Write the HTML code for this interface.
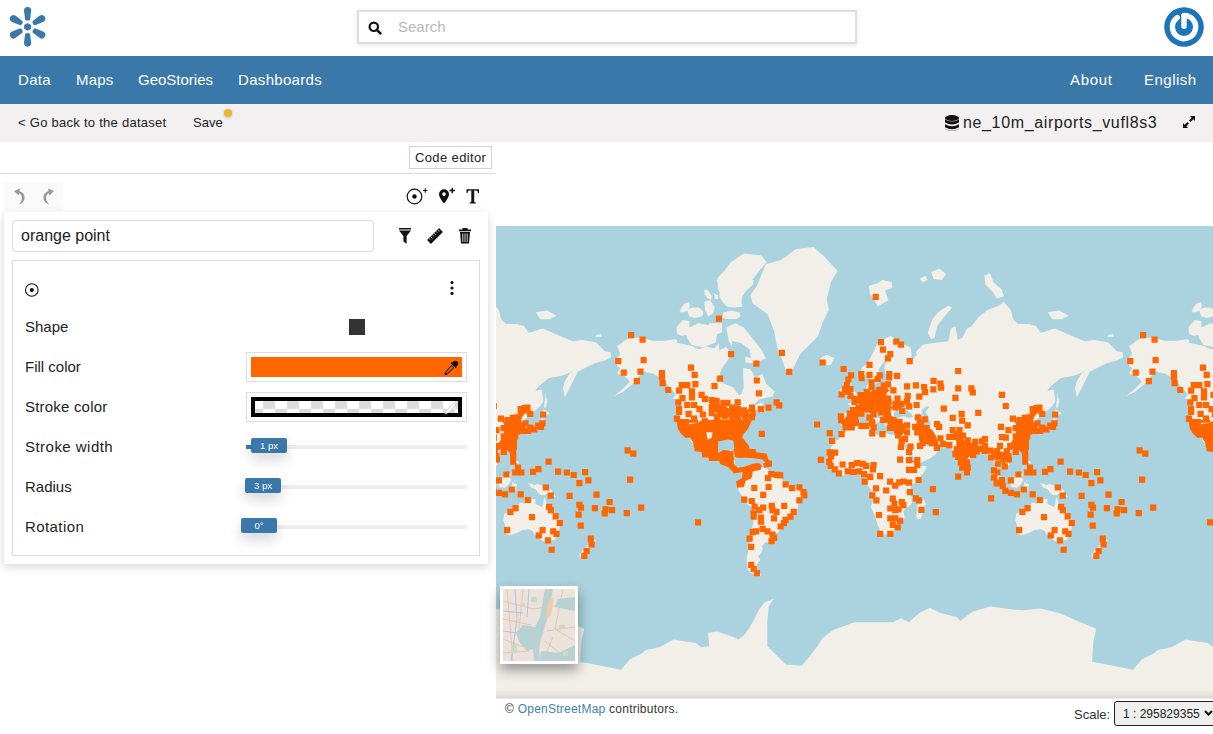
<!DOCTYPE html>
<html><head><meta charset="utf-8">
<style>
*{box-sizing:border-box;margin:0;padding:0}
html,body{width:1213px;height:734px;overflow:hidden;background:#fff;font-family:"Liberation Sans",sans-serif;color:#222}
.abs{position:absolute;display:block}
#search{position:absolute;left:357px;top:10px;width:500px;height:34px;border:2px solid #dedede;background:#fff;box-shadow:0 1px 4px rgba(0,0,0,.10)}
#search .ph{position:absolute;left:39px;top:6px;font-size:15px;color:#b8b8b8;line-height:17px}
#nav{position:absolute;left:0;top:56px;width:1213px;height:48px;background:#3a78a9}
#nav span{position:absolute;top:15px;font-size:15px;color:#fff;line-height:18px}
#sub{position:absolute;left:0;top:104px;width:1213px;height:38px;background:#f2f0f0}
.t13{position:absolute;font-size:13px;color:#222;line-height:16px;white-space:nowrap}
.lbl{position:absolute;left:25px;font-size:15px;color:#222;line-height:18px;white-space:nowrap}
.handle{position:absolute;height:15px;background:#3a78a9;border-radius:2px;color:#fff;font-size:9.6px;line-height:16px;text-align:center;box-shadow:0 6px 14px rgba(0,0,0,.17)}
.track{position:absolute;left:246px;width:221px;height:4px;background:#efeded}
</style></head><body>
<!-- header -->
<svg class="abs" style="left:0;top:0" width="56" height="56" viewBox="0 0 56 56">
  <g fill="#3b77a8">
    <g id="pt"><path d="M25.2 19.7 L24.0 11.0 Q23.8 6.9 27.6 6.9 Q31.4 6.9 31.2 11.0 L30.0 19.7 Q27.6 21.5 25.2 19.7 Z"/></g>
    <use href="#pt" transform="rotate(60 27.6 26.8)"/>
    <use href="#pt" transform="rotate(120 27.6 26.8)"/>
    <use href="#pt" transform="rotate(180 27.6 26.8)"/>
    <use href="#pt" transform="rotate(240 27.6 26.8)"/>
    <use href="#pt" transform="rotate(300 27.6 26.8)"/>
    <path d="M27.6 23.1 L31.1 25.0 L31.1 28.8 L27.6 30.7 L24.1 28.8 L24.1 25.0 Z"/>
  </g>
</svg>
<div id="search"><svg class="abs" style="left:8.5px;top:8.5px" width="14" height="14" viewBox="0 0 14 14"><circle cx="5.8" cy="5.8" r="4.2" fill="none" stroke="#111" stroke-width="2.2"/><path d="M8.8 8.8 L12.4 12.4" stroke="#111" stroke-width="2.6" stroke-linecap="round"/></svg><div class="ph">Search</div></div>
<svg class="abs" style="left:1163px;top:6px" width="42" height="42" viewBox="0 0 42 42">
  <circle cx="21" cy="21" r="19.8" fill="#1b75bb"/>
  <path d="M21 9.4 A11.6 11.6 0 1 1 14.18 11.62" fill="none" stroke="#fff" stroke-width="5.4" stroke-linecap="round"/>
  <path d="M21 10 V20.3" stroke="#fff" stroke-width="5.4" stroke-linecap="round"/>
</svg>
<!-- nav -->
<div id="nav">
  <span style="left:18px;letter-spacing:.33px">Data</span>
  <span style="left:76px;letter-spacing:.15px">Maps</span>
  <span style="left:138px">GeoStories</span>
  <span style="left:238px;letter-spacing:.32px">Dashboards</span>
  <span style="left:1070px;letter-spacing:.65px">About</span>
  <span style="left:1144px;letter-spacing:.48px">English</span>
</div>
<div id="sub">
  <span class="t13" style="left:18px;top:11px;letter-spacing:.27px">&lt; Go back to the dataset</span>
  <span class="t13" style="left:193px;top:11px">Save</span>
  <div class="abs" style="left:224px;top:5px;width:8px;height:8px;border-radius:50%;background:#f0b62b;box-shadow:0 1px 3px rgba(0,0,0,.2)"></div>
  <svg class="abs" style="left:945px;top:11px" width="14" height="17" viewBox="0 0 14 17"><g fill="#111"><ellipse cx="7" cy="3" rx="7" ry="3"/><path d="M0 4.6 Q7 8.6 14 4.6 V7.6 Q7 11.6 0 7.6Z"/><path d="M0 9.2 Q7 13.2 14 9.2 V12.2 Q7 16.2 0 12.2Z"/><path d="M0 13.8 Q7 17.8 14 13.8 V14 Q7 18 0 14Z"/></g></svg>
  <span class="abs" style="left:963px;top:10px;font-size:16px;letter-spacing:.64px;line-height:18px;color:#222;white-space:nowrap">ne_10m_airports_vufl8s3</span>
  <svg class="abs" style="left:1183px;top:12px" width="12" height="12" viewBox="0 0 12 12"><g fill="#111"><path d="M7 0 H12 V5 L10.3 3.3 L7.6 6 L6 4.4 L8.7 1.7Z"/><path d="M5 12 H0 V7 L1.7 8.7 L4.4 6 L6 7.6 L3.3 10.3Z"/></g></svg>
</div>
<!-- left panel -->
<div class="abs" style="left:409px;top:146px;width:83px;height:23px;border:1px solid #d4d4d4;background:#fff"></div>
<span class="t13" style="left:415px;top:150px;letter-spacing:.37px">Code editor</span>
<div class="abs" style="left:0;top:173px;width:496px;height:1px;background:#ddd"></div>
<div class="abs" style="left:4px;top:182px;width:59px;height:29px;background:#fafafa"></div>
<svg class="abs" style="left:12px;top:187px" width="46" height="20" viewBox="0 0 46 20">
  <g fill="#999">
    <path d="M2 4 L8 1.5 L7.5 4.2 Q13.5 6 12.5 12 Q11.5 16 7 17.5 Q10 14.5 10 11 Q9.8 7.5 7 6.3 L6.6 8.5Z"/>
    <path d="M42 4 L36 1.5 L36.5 4.2 Q30.5 6 31.5 12 Q32.5 16 37 17.5 Q34 14.5 34 11 Q34.2 7.5 37 6.3 L37.4 8.5Z"/>
  </g>
</svg>
<svg class="abs" style="left:404px;top:186px" width="80" height="20" viewBox="0 0 80 20">
  <circle cx="10.5" cy="10.5" r="7.3" fill="none" stroke="#111" stroke-width="1.2"/>
  <circle cx="10.5" cy="10.5" r="2.2" fill="#111"/>
  <path d="M19 4.5 H23.5 M21.25 2.3 V6.7" stroke="#111" stroke-width="1.1"/>
  <path d="M40 17.5 Q35 11.5 35 8.2 A5 5 0 0 1 45 8.2 Q45 11.5 40 17.5Z M40 6.3 A1.8 1.8 0 1 0 40.01 6.3Z" fill="#111" fill-rule="evenodd"/>
  <path d="M45.5 4.5 H51 M48.25 1.8 V7.2" stroke="#111" stroke-width="1.5"/>
  <path d="M62.5 3.2 H75 V7 H74 Q73.8 4.6 72 4.6 H70.2 V15.6 Q70.2 16.6 71.8 16.6 V17.5 H65.7 V16.6 Q67.3 16.6 67.3 15.6 V4.6 H65.5 Q63.7 4.6 63.5 7 H62.5Z" fill="#111"/>
</svg>
<div class="abs" style="left:4px;top:212px;width:484px;height:352px;background:#fff;box-shadow:0 3px 9px rgba(0,0,0,.16)"></div>
<div class="abs" style="left:12px;top:220px;width:362px;height:32px;border:1px solid #d8d8d8;border-radius:4px;background:#fff"></div>
<span class="abs" style="left:21px;top:227px;font-size:16px;line-height:18px;color:#222;white-space:nowrap">orange point</span>
<svg class="abs" style="left:396px;top:226px" width="80" height="20" viewBox="0 0 80 20">
  <path d="M3 2 H15 V3.6 H3Z M3 4.6 H15 L10.6 10 V17.8 L7.4 15.4 V10Z" fill="#111"/>
  <g transform="rotate(-45 39 10)"><rect x="30.5" y="7.3" width="17" height="5.4" fill="#111"/><path d="M33 7.3V9.3M35.5 7.3V10M38 7.3V9.3M40.5 7.3V10M43 7.3V9.3M45.5 7.3V10" stroke="#fff" stroke-width=".7"/></g>
  <path d="M63 3.4 H75 V5.2 H63Z M66.5 3.4 V2 H71.5 V3.4" fill="#111"/>
  <path d="M64 6 H74 L73 17.5 H65Z" fill="#111"/>
  <path d="M66.8 7.5 V16 M69 7.5 V16 M71.2 7.5 V16" stroke="#fff" stroke-width=".8"/>
</svg>
<div class="abs" style="left:12px;top:260px;width:468px;height:296px;border:1px solid #dcdcdc"></div>
<svg class="abs" style="left:23px;top:282px" width="18" height="18" viewBox="0 0 18 18"><circle cx="8.8" cy="8" r="6.3" fill="none" stroke="#111" stroke-width="1.1"/><circle cx="8.8" cy="8" r="2.1" fill="#111"/></svg>
<svg class="abs" style="left:448px;top:280px" width="8" height="17" viewBox="0 0 8 17"><circle cx="4" cy="2.6" r="1.6" fill="#111"/><circle cx="4" cy="8" r="1.6" fill="#111"/><circle cx="4" cy="13.4" r="1.6" fill="#111"/></svg>
<span class="lbl" style="top:318px">Shape</span>
<div class="abs" style="left:349px;top:319px;width:16px;height:16px;background:#333"></div>
<span class="lbl" style="top:358px">Fill color</span>
<div class="abs" style="left:246px;top:352px;width:221px;height:30px;border:1px solid #dcdcdc;background:#fff"></div>
<div class="abs" style="left:251px;top:357px;width:211px;height:20px;background:#ff6600"></div>
<svg class="abs" style="left:443px;top:360px" width="16" height="16" viewBox="0 0 16 16"><path d="M10.5 1.5 Q12.5 -0.2 14.3 1.6 Q16 3.4 14.4 5.4 L13.3 6.5 L13.8 7 L12.7 8.1 L7.8 3.2 L8.9 2.1 L9.4 2.6Z M8.3 4.9 L11.1 7.7 L4.6 14.2 L2.6 15.2 L1.4 14 L2.3 12 Z" fill="#111"/><path d="M8.6 6 L10 7.4 L4.3 13.1 L3 13.4 L3.2 12.2Z" fill="#ff6600"/></svg>
<span class="lbl" style="top:398px;letter-spacing:.2px">Stroke color</span>
<div class="abs" style="left:246px;top:392px;width:221px;height:30px;border:1px solid #dcdcdc;background:#fff"></div>
<svg class="abs" style="left:251px;top:397px" width="211" height="20" viewBox="0 0 211 20">
  <rect width="211" height="20" fill="#000"/>
  <svg x="4" y="4" width="203" height="12" viewBox="4 4 203 12"><rect x="4" y="4" width="203" height="12" fill="#fff"/><g fill="#dcdcdc"><rect x="0" y="12" width="12" height="12"/><rect x="12" y="0" width="12" height="12"/><rect x="24" y="12" width="12" height="12"/><rect x="36" y="0" width="12" height="12"/><rect x="48" y="12" width="12" height="12"/><rect x="60" y="0" width="12" height="12"/><rect x="72" y="12" width="12" height="12"/><rect x="84" y="0" width="12" height="12"/><rect x="96" y="12" width="12" height="12"/><rect x="108" y="0" width="12" height="12"/><rect x="120" y="12" width="12" height="12"/><rect x="132" y="0" width="12" height="12"/><rect x="144" y="12" width="12" height="12"/><rect x="156" y="0" width="12" height="12"/><rect x="168" y="12" width="12" height="12"/><rect x="180" y="0" width="12" height="12"/><rect x="192" y="12" width="12" height="12"/><rect x="204" y="0" width="12" height="12"/></g></svg>
  <path d="M194 17 L195.5 13.5 L203 6 L205 8 L197.5 15.5Z" fill="#fff" stroke="#c8c8c8" stroke-width=".8"/>
</svg>
<span class="lbl" style="top:438px;letter-spacing:.47px">Stroke width</span>
<div class="track" style="top:445px"></div>
<div class="abs" style="left:246px;top:445px;width:6px;height:4px;background:#3a78a9"></div>
<div class="handle" style="left:251px;top:438px;width:36px">1 px</div>
<span class="lbl" style="top:478px">Radius</span>
<div class="track" style="top:485px"></div>
<div class="handle" style="left:245px;top:478px;width:36px">3 px</div>
<span class="lbl" style="top:518px;letter-spacing:.42px">Rotation</span>
<div class="track" style="top:525px"></div>
<div class="handle" style="left:241px;top:518px;width:36px">0°</div>
<!-- map -->
<svg width="717" height="472" viewBox="0 0 717 472" style="position:absolute;left:496px;top:226px;display:block"><rect width="717" height="472" fill="#aad3df"/><path fill="#f2efe9" d="M39.8 86.3L51.3 84.5L60.5 89.8L53.6 93.3L44.4 93.3ZM99.8 108.9L105.5 108.0L105.5 110.8L99.8 111.3ZM-166.8 199.3L-167.5 196.2L-166.5 191.0L-167.2 188.1L-164.7 187.0L-158.3 187.4L-156.3 187.4L-155.7 183.2L-157.6 179.7L-160.7 178.0L-156.1 176.5L-156.7 174.3L-153.7 175.0L-151.9 173.4L-150.4 171.4L-148.9 170.5L-147.3 167.0L-144.8 165.8L-141.8 164.6L-142.1 162.2L-138.9 155.0L-139.1 159.4L-139.8 161.9L-138.4 163.4L-134.8 164.4L-130.5 163.2L-127.0 162.9L-124.0 160.2L-123.3 155.5L-118.9 150.4L-112.0 148.7L-115.6 147.3L-122.7 148.1L-123.7 141.3L-119.2 130.5L-125.1 137.2L-129.1 142.8L-129.1 147.3L-127.7 150.7L-130.2 155.5L-133.4 159.4L-135.5 160.9L-137.1 155.0L-138.4 151.5L-138.8 149.0L-144.0 154.2L-146.0 151.5L-147.0 145.8L-146.2 141.3L-141.2 138.2L-139.1 134.9L-134.8 126.2L-131.2 118.6L-122.7 112.5L-117.3 109.9L-108.5 115.4L-106.4 117.4L-97.4 121.4L-96.4 128.0L-96.4 134.9L-91.4 128.8L-91.8 125.6L-84.9 118.6L-68.7 116.3L-59.5 115.2L-57.2 102.5L-52.6 100.2L-50.3 114.0L-45.7 111.7L-41.0 102.5L-36.4 100.2L-29.5 90.9L-20.3 84.0L-8.7 79.4L-4.1 75.9L2.8 84.0L5.1 93.3L9.7 97.9L21.3 97.9L28.2 100.2L32.8 107.1L46.7 102.5L62.8 109.4L76.7 115.2L85.9 114.0L99.8 116.3L109.0 125.6L114.4 126.1L115.3 131.0L109.5 134.3L103.0 135.9L98.1 137.6L91.5 140.8L85.0 144.1L81.7 145.7L76.8 155.5L71.9 165.4L68.7 171.1L67.0 162.1L68.7 155.5L73.6 147.4L76.8 145.7L65.4 149.8L52.3 152.3L42.5 160.5L39.2 164.5L45.8 163.7L47.4 175.2L42.3 182.2L33.7 188.1L30.2 192.0L28.0 194.8L30.0 199.3L29.5 202.8L25.9 203.7L25.9 199.3L23.8 195.7L22.4 193.8L18.4 196.0L18.1 192.9L13.8 196.6L20.4 198.6L17.4 201.1L17.1 203.7L19.2 208.8L19.5 211.2L17.4 215.3L15.2 219.3L11.7 222.4L8.4 223.5L4.6 224.7L2.4 226.7L0.3 224.7L-2.5 227.0L-2.5 230.0L0.0 232.9L1.3 238.8L-1.8 241.0L-5.0 243.7L-5.7 241.1L-10.4 238.1L-11.1 236.6L-12.8 240.3L-11.2 244.6L-9.6 246.7L-6.9 251.7L-6.1 254.2L-9.6 252.4L-11.4 248.2L-14.2 243.9L-13.6 238.8L-15.2 232.2L-18.9 232.9L-19.9 229.2L-21.9 226.2L-26.0 223.9L-29.6 224.7L-33.1 227.7L-38.1 232.9L-39.8 237.4L-40.9 241.7L-43.8 244.4L-45.6 241.7L-47.8 237.4L-49.0 233.7L-50.5 228.5L-50.7 225.4L-55.9 223.5L-56.6 221.6L-58.7 219.6L-65.8 218.8L-72.2 218.5L-73.6 216.1L-79.3 215.8L-81.9 212.9L-85.0 211.2L-83.3 216.1L-82.2 218.5L-80.3 220.8L-76.5 220.5L-73.9 217.4L-70.5 221.6L-69.0 223.1L-71.9 227.7L-76.5 231.5L-82.2 234.4L-90.0 237.6L-92.1 237.9L-93.3 233.7L-98.2 224.7L-100.0 220.8L-104.2 214.5L-104.2 212.1L-105.4 215.0L-107.6 211.4L-105.1 208.8L-104.1 206.2L-103.1 203.7L-102.8 200.2L-104.6 199.8L-107.1 200.7L-110.3 199.5L-114.2 199.8L-116.3 196.6L-116.7 193.8L-112.8 192.0L-121.4 192.7L-121.3 194.8L-119.9 197.5L-122.0 200.4L-123.8 197.0L-125.6 193.8L-126.3 191.0L-127.7 189.1L-132.0 186.2L-134.4 183.6L-136.2 183.0L-136.2 186.2L-132.7 190.1L-131.2 191.0L-127.7 192.9L-129.5 195.7L-131.7 197.5L-133.8 192.3L-136.6 190.4L-139.4 187.2L-141.2 185.6L-144.8 187.4L-146.5 187.5L-149.0 187.2L-149.4 189.5L-150.9 191.2L-154.4 194.8L-153.7 196.2L-155.0 198.2L-157.1 199.8L-160.3 199.8L-162.0 201.1L-163.0 200.2L-164.5 198.9ZM32.3 204.5L35.2 201.9L39.4 201.6L40.6 199.3L41.3 198.4L43.7 197.7L45.1 193.8L45.8 191.4L47.2 191.4L48.0 194.8L46.5 199.3L46.4 201.6L45.0 203.0L42.6 203.5L39.1 205.4L38.0 204.0L35.2 204.5ZM32.2 204.7L31.6 209.6L33.0 208.8L33.3 205.4ZM34.4 205.7L37.3 204.0L37.7 205.4L35.2 206.6ZM45.1 191.0L45.5 187.7L47.8 183.2L52.2 186.2L53.4 187.5L49.8 190.1L46.5 189.5ZM48.0 182.2L48.2 178.0L49.4 171.4L48.8 163.7L49.7 169.1L51.2 175.8L50.1 181.1ZM18.8 218.8L17.8 223.9L16.8 222.4L17.7 220.0ZM3.2 227.0L1.7 229.7L0.6 229.2L1.4 227.3ZM17.7 229.2L19.8 229.2L19.5 232.9L22.4 235.9L22.4 238.1L18.8 236.2L17.4 235.2L17.1 232.2ZM24.5 242.1L26.1 246.0L24.2 248.0L19.5 246.0L21.6 243.9ZM24.5 238.8L23.8 241.7L20.9 242.9L19.5 241.0L19.5 239.1ZM16.0 239.5L16.5 240.0L13.3 243.9L12.7 244.2ZM12.1 246.0L15.2 248.2L13.8 250.3L15.2 254.6L11.7 259.6L8.8 261.7L3.9 261.0L2.7 260.3L2.4 257.4L1.0 253.9L3.9 253.2L6.7 251.7L8.1 249.6L10.0 248.2ZM-3.2 264.5L2.4 265.8L6.0 265.7L8.8 267.0L8.6 268.1L3.9 267.7L-0.4 267.0L-4.4 265.7ZM24.1 254.2L20.9 255.1L17.0 255.3L17.8 257.4L21.4 258.1L19.9 261.0L20.5 263.8L17.4 263.8L15.7 261.0L16.1 257.4L17.8 254.6L22.4 254.7ZM32.6 257.3L36.6 258.1L38.0 259.6L41.6 258.1L45.8 259.7L50.1 260.7L53.4 262.4L55.8 264.5L56.8 267.4L60.0 270.3L59.3 271.0L54.4 268.9L50.8 267.4L49.4 268.9L46.5 269.1L43.0 268.1L42.3 266.7L39.4 263.1L35.9 261.7L33.7 260.3L34.0 258.8L32.0 258.1ZM48.7 271.3L50.5 276.8L52.9 279.8L54.4 283.5L59.3 288.1L62.9 292.0L64.5 297.8L62.9 304.9L61.0 307.5L59.3 313.6L55.8 314.5L53.9 316.0L51.5 314.9L50.1 316.0L45.8 314.5L42.7 310.1L43.0 309.0L42.0 304.9L39.4 309.2L38.4 308.3L36.6 304.9L32.3 303.2L26.6 304.1L20.9 307.1L13.8 309.2L9.6 308.0L10.4 303.2L8.4 297.5L7.4 294.3L8.1 288.1L12.4 285.8L18.1 284.3L20.2 280.5L24.5 276.8L28.8 277.6L30.5 276.8L32.0 273.9L34.4 272.5L40.1 273.5L39.1 276.1L40.1 278.3L46.2 281.3L47.2 277.6L47.5 273.9ZM51.8 319.7L56.9 320.0L55.8 324.5L53.6 324.8L52.5 321.9ZM91.6 308.2L94.6 311.8L96.3 313.6L99.9 313.8L97.7 317.2L95.3 321.0L93.2 319.1L93.5 316.3L93.5 311.8ZM91.6 319.1L93.9 321.0L91.8 324.8L86.4 330.9L82.8 330.3L85.6 325.8L89.6 321.9ZM-428.0 435.8L-406.9 439.8L-387.1 443.7L-377.9 433.2L-367.3 427.9L-362.0 423.9L-348.8 421.3L-334.3 413.4L-311.9 417.3L-306.6 421.3L-298.7 420.0L-300.0 406.8L-290.8 405.5L-275.0 410.7L-269.7 413.4L-264.4 409.4L-259.1 402.8L-253.9 393.6L-248.6 383.0L-243.3 376.4L-234.1 372.5L-239.3 380.4L-240.7 396.2L-240.7 420.0L-232.7 427.9L-222.2 438.4L-206.4 439.8L-198.4 430.5L-190.5 420.0L-185.3 412.0L-174.7 404.1L-153.6 396.2L-129.8 396.2L-115.0 396.2L-107.1 392.3L-99.2 396.2L-88.6 387.0L-78.1 381.7L-67.5 387.0L-51.7 390.9L-47.7 394.9L-35.8 385.7L-17.4 380.4L1.1 383.0L14.3 384.3L32.8 382.5L51.2 387.0L69.7 394.9L88.2 402.8L85.5 414.7L84.0 435.8L84.0 511.2L-428.0 511.2ZM121.0 132.7L124.2 127.8L121.0 120.4L130.8 113.0L143.9 111.4L156.9 114.7L168.4 114.7L180.0 113.0L181.6 117.0L194.4 119.4L203.0 123.3L210.1 120.6L218.6 122.5L222.9 116.6L222.9 124.4L230.0 121.0L235.7 128.0L242.1 124.4L241.4 116.6L238.5 129.8L234.3 134.9L228.6 140.4L224.0 152.0L226.4 156.9L237.1 161.2L242.8 169.1L247.8 161.9L247.1 152.9L247.1 141.9L254.9 143.4L259.2 152.0L266.1 147.8L270.5 158.2L278.4 165.6L276.6 170.3L263.4 173.2L260.6 175.8L257.0 180.1L266.6 176.0L267.0 182.2L271.2 183.6L264.6 187.2L262.9 184.2L259.9 186.2L258.4 190.1L252.8 192.7L251.5 195.9L249.9 199.3L250.6 202.5L242.8 207.9L243.4 213.7L243.7 218.9L241.8 217.7L240.2 212.9L237.8 211.2L232.1 210.7L231.0 212.9L224.3 211.9L219.6 214.8L219.3 219.3L219.6 224.7L221.3 228.2L224.3 229.2L227.9 228.9L229.6 225.1L234.3 224.7L232.8 229.2L232.1 232.9L238.5 233.2L239.0 238.8L241.4 242.4L244.9 242.7L247.9 243.9L247.2 245.7L243.7 245.3L240.0 244.2L236.4 242.4L233.4 238.1L228.6 236.2L226.2 234.6L222.9 232.9L220.0 233.2L215.9 231.8L212.2 230.0L208.7 228.0L208.2 226.0L207.8 223.9L204.0 219.3L199.7 214.5L194.9 208.4L198.0 214.5L201.1 220.5L201.7 222.5L198.7 220.0L195.6 216.1L194.4 214.5L193.3 211.2L191.5 207.1L189.5 204.5L186.5 203.7L183.8 197.9L181.1 193.1L180.9 188.1L181.6 181.7L180.6 177.1L183.1 175.8L176.7 172.1L180.0 168.6L171.7 158.8L165.1 152.3L156.9 147.4L147.1 145.7L143.9 149.0L135.7 158.8L127.5 165.4L117.7 170.6L125.9 163.7L134.1 155.5L129.1 150.6L121.0 147.4L124.2 142.5L119.3 137.6ZM230.4 101.6L239.1 97.2L247.9 101.6L256.6 112.5L265.3 123.4L269.7 132.1L260.9 136.4L252.2 138.6L243.5 132.1L237.0 123.4L232.6 114.6ZM221.7 51.4L228.3 44.9L234.8 36.2L247.9 27.4L265.3 29.6L270.8 36.2L263.1 44.9L256.6 53.6L247.9 62.3L243.5 73.2L234.8 77.6L226.1 71.0L221.7 62.3ZM220.7 54.0L257.9 54.0L256.9 58.8L250.3 64.5L246.4 70.2L245.5 75.9L246.4 80.7L238.8 81.6L231.2 80.7L227.4 76.9L223.6 71.2L223.6 63.5ZM183.5 84.5L188.3 77.8L193.1 75.9L194.0 80.7L190.2 85.5L185.4 86.4ZM191.2 83.6L196.9 81.6L202.6 81.6L207.4 85.5L206.4 90.2L198.8 92.1L193.1 90.2ZM208.3 63.5L212.1 64.5L215.9 70.2L215.0 74.0L211.2 72.1L208.3 67.3ZM217.9 67.3L221.7 69.3L222.6 73.1L218.8 73.1ZM208.3 75.9L214.0 74.0L218.8 81.6L216.9 87.4L212.1 90.2L209.3 84.5ZM227.4 86.4L235.0 84.5L243.6 86.4L244.5 90.2L240.7 93.1L231.2 93.1L226.4 92.1ZM212.1 98.8L217.9 96.9L221.7 103.6L218.8 107.4L214.0 103.6ZM189.0 103.7L202.1 97.2L215.2 99.4L221.7 105.9L219.5 116.8L206.5 121.2L195.6 119.0L191.2 112.5ZM180.3 101.6L186.8 93.9L193.4 95.0L193.4 105.9L186.8 110.3L181.4 108.1ZM213.0 97.2L226.1 97.2L226.1 105.9L217.4 110.3L213.0 105.9ZM372.9 59.8L380.9 57.5L386.7 54.0L395.9 56.3L395.9 62.1L389.0 64.4L392.5 74.8L389.0 75.9L382.1 80.6L378.6 74.8L374.0 67.9ZM423.6 52.9L429.4 49.4L431.7 54.0L427.1 56.3ZM435.2 45.9L443.3 42.5L450.2 48.2L445.6 54.0L437.5 52.9ZM431.7 107.1L436.3 93.3L443.3 85.2L452.5 79.4L456.0 81.7L447.9 90.9L441.0 100.2L438.6 111.7L435.2 112.9ZM488.3 49.4L494.0 47.1L497.5 56.3L505.6 63.2L507.9 70.2L501.0 72.5L496.4 65.6L489.4 58.6ZM551.8 86.3L563.3 84.5L572.5 89.8L565.6 93.3L556.4 93.3ZM611.8 108.9L617.5 108.0L617.5 110.8L611.8 111.3ZM254.4 68.9L260.9 60.1L269.7 38.3L284.9 34.0L300.2 23.1L317.6 20.9L328.5 30.7L341.6 44.9L335.1 55.8L330.7 73.2L332.9 84.1L326.3 97.2L322.0 110.3L313.3 119.0L304.5 127.7L295.8 145.1L291.5 149.5L287.1 136.4L280.6 119.0L278.4 105.9L271.8 88.5L263.1 81.9L256.6 77.6ZM324.2 132.1L330.7 128.8L338.3 132.1L335.1 138.6L326.3 139.7ZM349.9 173.4L355.9 172.3L360.0 171.0L360.4 167.0L358.1 165.4L355.2 159.7L355.4 155.3L353.7 152.6L350.9 152.6L349.5 156.9L350.0 159.9L350.9 162.4L352.9 163.2L353.7 165.8L351.3 167.3L350.6 170.0L353.3 170.5L351.6 171.6ZM344.1 170.3L348.9 168.7L349.5 164.4L349.2 161.2L346.2 161.4L343.8 163.9L344.1 166.8L343.2 169.1ZM345.2 199.3L344.5 196.2L345.5 191.0L344.8 188.1L347.3 187.0L353.7 187.4L355.7 187.4L356.3 183.2L354.4 179.7L351.3 178.0L355.9 176.5L355.3 174.3L358.3 175.0L360.1 173.4L361.6 171.4L363.1 170.5L364.7 167.0L367.2 165.8L370.2 164.6L369.9 162.2L373.1 155.0L372.9 159.4L372.2 161.9L373.6 163.4L377.2 164.4L381.5 163.2L385.0 162.9L388.0 160.2L388.7 155.5L393.1 150.4L400.0 148.7L396.4 147.3L389.3 148.1L388.3 141.3L392.8 130.5L386.9 137.2L382.9 142.8L382.9 147.3L384.3 150.7L381.8 155.5L378.6 159.4L376.5 160.9L374.9 155.0L373.6 151.5L373.2 149.0L368.0 154.2L366.0 151.5L365.0 145.8L365.8 141.3L370.8 138.2L372.9 134.9L377.2 126.2L380.8 118.6L389.3 112.5L394.7 109.9L403.5 115.4L405.6 117.4L414.6 121.4L415.6 128.0L415.6 134.9L420.6 128.8L420.2 125.6L427.1 118.6L443.3 116.3L452.5 115.2L454.8 102.5L459.4 100.2L461.7 114.0L466.3 111.7L471.0 102.5L475.6 100.2L482.5 90.9L491.7 84.0L503.3 79.4L507.9 75.9L514.8 84.0L517.1 93.3L521.7 97.9L533.3 97.9L540.2 100.2L544.8 107.1L558.7 102.5L574.8 109.4L588.7 115.2L597.9 114.0L611.8 116.3L621.0 125.6L626.4 126.1L627.3 131.0L621.5 134.3L615.0 135.9L610.1 137.6L603.5 140.8L597.0 144.1L593.7 145.7L588.8 155.5L583.9 165.4L580.7 171.1L579.0 162.1L580.7 155.5L585.6 147.4L588.8 145.7L577.4 149.8L564.3 152.3L554.5 160.5L551.2 164.5L557.8 163.7L559.4 175.2L554.3 182.2L545.7 188.1L542.2 192.0L540.0 194.8L542.0 199.3L541.5 202.8L537.9 203.7L537.9 199.3L535.8 195.7L534.4 193.8L530.4 196.0L530.1 192.9L525.8 196.6L532.4 198.6L529.4 201.1L529.1 203.7L531.2 208.8L531.5 211.2L529.4 215.3L527.2 219.3L523.7 222.4L520.4 223.5L516.6 224.7L514.4 226.7L512.3 224.7L509.5 227.0L509.5 230.0L512.0 232.9L513.3 238.8L510.2 241.0L507.0 243.7L506.3 241.1L501.6 238.1L500.9 236.6L499.2 240.3L500.8 244.6L502.4 246.7L505.1 251.7L505.9 254.2L502.4 252.4L500.6 248.2L497.8 243.9L498.4 238.8L496.8 232.2L493.1 232.9L492.1 229.2L490.1 226.2L486.0 223.9L482.4 224.7L478.9 227.7L473.9 232.9L472.2 237.4L471.1 241.7L468.2 244.4L466.4 241.7L464.2 237.4L463.0 233.7L461.5 228.5L461.3 225.4L456.1 223.5L455.4 221.6L453.3 219.6L446.2 218.8L439.8 218.5L438.4 216.1L432.7 215.8L430.1 212.9L427.0 211.2L428.7 216.1L429.8 218.5L431.7 220.8L435.5 220.5L438.1 217.4L441.5 221.6L443.0 223.1L440.1 227.7L435.5 231.5L429.8 234.4L422.0 237.6L419.9 237.9L418.7 233.7L413.8 224.7L412.0 220.8L407.8 214.5L407.8 212.1L406.6 215.0L404.4 211.4L406.9 208.8L407.9 206.2L408.9 203.7L409.2 200.2L407.4 199.8L404.9 200.7L401.7 199.5L397.8 199.8L395.7 196.6L395.3 193.8L399.2 192.0L390.6 192.7L390.7 194.8L392.1 197.5L390.0 200.4L388.2 197.0L386.4 193.8L385.7 191.0L384.3 189.1L380.0 186.2L377.6 183.6L375.8 183.0L375.8 186.2L379.3 190.1L380.8 191.0L384.3 192.9L382.5 195.7L380.3 197.5L378.2 192.3L375.4 190.4L372.6 187.2L370.8 185.6L367.2 187.4L365.5 187.5L363.0 187.2L362.6 189.5L361.1 191.2L357.6 194.8L358.3 196.2L357.0 198.2L354.9 199.8L351.7 199.8L350.0 201.1L349.0 200.2L347.5 198.9ZM472.1 242.0L474.3 244.6L473.9 247.5L472.1 247.5L471.5 243.9ZM544.3 204.5L547.2 201.9L551.4 201.6L552.6 199.3L553.3 198.4L555.7 197.7L557.1 193.8L557.8 191.4L559.2 191.4L560.0 194.8L558.5 199.3L558.4 201.6L557.0 203.0L554.6 203.5L551.1 205.4L550.0 204.0L547.2 204.5ZM544.2 204.7L543.6 209.6L545.0 208.8L545.3 205.4ZM546.4 205.7L549.3 204.0L549.7 205.4L547.2 206.6ZM557.1 191.0L557.5 187.7L559.8 183.2L564.2 186.2L565.4 187.5L561.8 190.1L558.5 189.5ZM560.0 182.2L560.2 178.0L561.4 171.4L560.8 163.7L561.7 169.1L563.2 175.8L562.1 181.1ZM530.8 218.8L529.8 223.9L528.8 222.4L529.7 220.0ZM515.2 227.0L513.7 229.7L512.6 229.2L513.4 227.3ZM529.7 229.2L531.8 229.2L531.5 232.9L534.4 235.9L534.4 238.1L530.8 236.2L529.4 235.2L529.1 232.2ZM536.5 242.1L538.1 246.0L536.2 248.0L531.5 246.0L533.6 243.9ZM536.5 238.8L535.8 241.7L532.9 242.9L531.5 241.0L531.5 239.1ZM528.0 239.5L528.5 240.0L525.3 243.9L524.7 244.2ZM524.1 246.0L527.2 248.2L525.8 250.3L527.2 254.6L523.7 259.6L520.8 261.7L515.9 261.0L514.7 260.3L514.4 257.4L513.0 253.9L515.9 253.2L518.7 251.7L520.1 249.6L522.0 248.2ZM493.5 248.0L496.7 248.6L499.9 252.4L505.2 255.3L508.8 260.3L508.5 264.4L506.6 263.8L503.1 260.3L499.5 256.0L496.7 252.4L494.5 249.6ZM508.8 264.5L514.4 265.8L518.0 265.7L520.8 267.0L520.6 268.1L515.9 267.7L511.6 267.0L507.6 265.7ZM536.1 254.2L532.9 255.1L529.0 255.3L529.8 257.4L533.4 258.1L531.9 261.0L532.5 263.8L529.4 263.8L527.7 261.0L528.1 257.4L529.8 254.6L534.4 254.7ZM544.6 257.3L548.6 258.1L550.0 259.6L553.6 258.1L557.8 259.7L562.1 260.7L565.4 262.4L567.8 264.5L568.8 267.4L572.0 270.3L571.3 271.0L566.4 268.9L562.8 267.4L561.4 268.9L558.5 269.1L555.0 268.1L554.3 266.7L551.4 263.1L547.9 261.7L545.7 260.3L546.0 258.8L544.0 258.1ZM560.7 271.3L562.5 276.8L564.9 279.8L566.4 283.5L571.3 288.1L574.9 292.0L576.5 297.8L574.9 304.9L573.0 307.5L571.3 313.6L567.8 314.5L565.9 316.0L563.5 314.9L562.1 316.0L557.8 314.5L554.7 310.1L555.0 309.0L554.0 304.9L551.4 309.2L550.4 308.3L548.6 304.9L544.3 303.2L538.6 304.1L532.9 307.1L525.8 309.2L521.6 308.0L522.4 303.2L520.4 297.5L519.4 294.3L520.1 288.1L524.4 285.8L530.1 284.3L532.2 280.5L536.5 276.8L540.8 277.6L542.5 276.8L544.0 273.9L546.4 272.5L552.1 273.5L551.1 276.1L552.1 278.3L558.2 281.3L559.2 277.6L559.5 273.9ZM563.8 319.7L568.9 320.0L567.8 324.5L565.6 324.8L564.5 321.9ZM603.6 308.2L606.6 311.8L608.3 313.6L611.9 313.8L609.7 317.2L607.3 321.0L605.2 319.1L605.5 316.3L605.5 311.8ZM603.6 319.1L605.9 321.0L603.8 324.8L598.4 330.9L594.8 330.3L597.6 325.8L601.6 321.9ZM349.6 201.4L354.4 202.5L362.3 199.6L371.9 198.9L373.8 199.6L373.6 201.9L372.2 204.5L374.4 206.2L376.8 206.6L382.2 209.6L385.7 210.7L386.6 207.8L389.3 206.6L393.6 208.4L400.5 209.3L403.9 209.2L404.4 211.4L406.1 215.3L408.6 220.8L410.5 223.9L412.8 230.0L414.2 233.7L419.4 237.8L419.9 239.5L430.8 240.3L429.1 244.6L422.7 253.2L416.3 258.8L414.5 261.7L413.9 265.7L415.6 271.0L415.9 277.6L407.5 284.7L408.5 292.0L404.4 294.2L402.1 300.6L397.8 305.8L394.3 307.5L386.4 308.9L384.3 308.0L383.9 304.1L381.5 298.5L378.6 289.5L374.8 280.8L377.2 273.9L376.8 268.6L375.5 264.5L372.2 260.3L370.8 256.7L371.5 250.6L366.5 249.9L362.8 246.9L357.7 248.2L355.2 249.2L352.3 248.5L347.3 249.6L342.6 247.0L339.2 243.9L336.7 240.3L333.1 234.9L334.5 232.9L333.7 225.7L335.2 221.3L337.4 217.7L339.7 214.7L342.4 213.7L344.1 210.4L347.2 205.2ZM428.1 273.2L429.7 278.3L427.4 285.0L424.8 292.7L422.0 293.5L420.2 290.4L421.0 285.0L421.3 279.1L425.6 276.8L426.6 275.4ZM256.0 238.2L251.6 240.3L249.6 242.4L248.1 243.7L247.5 246.0L247.9 250.3L245.6 253.9L243.1 257.4L242.9 259.1L242.4 262.4L242.5 264.5L248.3 273.2L251.3 278.3L258.0 282.6L257.9 290.6L256.5 300.8L256.2 305.8L253.9 312.7L253.0 321.0L252.0 325.8L250.6 331.9L251.3 339.5L252.0 344.0L255.6 347.6L260.6 350.1L265.6 349.3L260.7 343.6L260.6 338.4L264.4 334.0L262.0 329.8L264.8 327.8L267.0 322.9L265.6 320.0L269.8 316.3L275.5 315.4L277.2 311.8L276.6 309.5L278.1 309.0L281.9 306.6L286.2 300.8L288.9 297.5L289.0 293.5L296.6 289.6L299.7 288.1L301.8 282.0L303.2 274.6L308.4 267.4L307.5 263.4L301.1 260.3L295.0 259.6L289.0 257.4L286.9 256.0L286.2 253.2L283.6 249.0L279.5 247.7L275.2 246.3L272.0 243.9L270.2 240.7L266.3 241.0L262.7 240.8L258.2 238.8L256.3 240.3ZM238.0 222.8L240.8 222.1L243.5 222.2L247.1 223.9L250.3 225.3L252.5 226.8L247.8 227.1L244.5 224.7L241.7 223.9L237.3 224.2ZM255.6 227.1L259.2 227.4L260.7 229.2L257.0 229.7L252.2 229.5L254.2 227.7ZM84.0 435.8L105.1 439.8L124.9 443.7L134.1 433.2L144.7 427.9L150.0 423.9L163.2 421.3L177.7 413.4L200.1 417.3L205.4 421.3L213.3 420.0L212.0 406.8L221.2 405.5L237.0 410.7L242.3 413.4L247.6 409.4L252.9 402.8L258.1 393.6L263.4 383.0L268.7 376.4L277.9 372.5L272.7 380.4L271.3 396.2L271.3 420.0L279.3 427.9L289.8 438.4L305.6 439.8L313.6 430.5L321.5 420.0L326.7 412.0L337.3 404.1L358.4 396.2L382.2 396.2L397.0 396.2L404.9 392.3L412.8 396.2L423.4 387.0L433.9 381.7L444.5 387.0L460.3 390.9L464.3 394.9L476.2 385.7L494.6 380.4L513.1 383.0L526.3 384.3L544.8 382.5L563.2 387.0L581.7 394.9L600.2 402.8L597.5 414.7L596.0 435.8L596.0 511.2L84.0 511.2ZM633.0 132.7L636.2 127.8L633.0 120.4L642.8 113.0L655.9 111.4L668.9 114.7L680.4 114.7L692.0 113.0L693.6 117.0L706.4 119.4L715.0 123.3L722.1 120.6L730.6 122.5L734.9 116.6L734.9 124.4L742.0 121.0L747.7 128.0L754.1 124.4L753.4 116.6L750.5 129.8L746.3 134.9L740.6 140.4L736.0 152.0L738.4 156.9L749.1 161.2L754.8 169.1L759.8 161.9L759.1 152.9L759.1 141.9L766.9 143.4L771.2 152.0L778.1 147.8L782.5 158.2L790.4 165.6L788.6 170.3L775.4 173.2L772.6 175.8L769.0 180.1L778.6 176.0L779.0 182.2L783.2 183.6L776.6 187.2L774.9 184.2L771.9 186.2L770.4 190.1L764.8 192.7L763.5 195.9L761.9 199.3L762.6 202.5L754.8 207.9L755.4 213.7L755.7 218.9L753.8 217.7L752.2 212.9L749.8 211.2L744.1 210.7L743.0 212.9L736.3 211.9L731.6 214.8L731.3 219.3L731.6 224.7L733.3 228.2L736.3 229.2L739.9 228.9L741.6 225.1L746.3 224.7L744.8 229.2L744.1 232.9L750.5 233.2L751.0 238.8L753.4 242.4L756.9 242.7L759.9 243.9L759.2 245.7L755.7 245.3L752.0 244.2L748.4 242.4L745.4 238.1L740.6 236.2L738.2 234.6L734.9 232.9L732.0 233.2L727.9 231.8L724.2 230.0L720.7 228.0L720.2 226.0L719.8 223.9L716.0 219.3L711.7 214.5L706.9 208.4L710.0 214.5L713.1 220.5L713.7 222.5L710.7 220.0L707.6 216.1L706.4 214.5L705.3 211.2L703.5 207.1L701.5 204.5L698.5 203.7L695.8 197.9L693.1 193.1L692.9 188.1L693.6 181.7L692.6 177.1L695.1 175.8L688.7 172.1L692.0 168.6L683.7 158.8L677.1 152.3L668.9 147.4L659.1 145.7L655.9 149.0L647.7 158.8L639.5 165.4L629.7 170.6L637.9 163.7L646.1 155.5L641.1 150.6L633.0 147.4L636.2 142.5L631.3 137.6ZM695.5 84.5L700.3 77.8L705.1 75.9L706.0 80.7L702.2 85.5L697.4 86.4ZM703.2 83.6L708.9 81.6L714.6 81.6L719.4 85.5L718.4 90.2L710.8 92.1L705.1 90.2ZM701.0 103.7L714.1 97.2L727.2 99.4L733.7 105.9L731.5 116.8L718.5 121.2L707.6 119.0L703.2 112.5ZM692.3 101.6L698.8 93.9L705.4 95.0L705.4 105.9L698.8 110.3L693.4 108.1ZM596.0 435.8L617.1 439.8L636.9 443.7L646.1 433.2L656.7 427.9L662.0 423.9L675.2 421.3L689.7 413.4L712.1 417.3L717.4 421.3L725.3 420.0L724.0 406.8L733.2 405.5L749.0 410.7L754.3 413.4L759.6 409.4L764.9 402.8L770.1 393.6L775.4 383.0L780.7 376.4L789.9 372.5L784.7 380.4L783.3 396.2L783.3 420.0L791.3 427.9L801.8 438.4L817.6 439.8L825.6 430.5L833.5 420.0L838.7 412.0L849.3 404.1L870.4 396.2L894.2 396.2L909.0 396.2L916.9 392.3L924.8 396.2L935.4 387.0L945.9 381.7L956.5 387.0L972.3 390.9L976.3 394.9L988.2 385.7L1006.6 380.4L1025.1 383.0L1038.3 384.3L1056.8 382.5L1075.2 387.0L1093.7 394.9L1112.2 402.8L1109.5 414.7L1108.0 435.8L1108.0 511.2L596.0 511.2Z"/><path fill="#aad3df" d="M399.2 192.0L402.8 191.6L407.8 190.1L412.8 192.0L417.0 191.0L414.9 187.2L410.6 184.2L406.1 185.4L404.2 183.2L402.1 181.1L400.0 184.2L397.7 187.7L398.1 191.0ZM431.2 180.1L425.6 184.2L426.3 190.1L428.4 193.8L427.7 198.4L432.7 199.8L434.8 198.8L433.4 193.8L432.7 191.0L430.5 187.2L429.8 185.2L433.4 181.1ZM236.3 114.9L245.0 117.1L253.8 123.6L254.8 132.3L249.4 130.2L249.4 136.7L260.3 136.7L269.0 135.6L271.2 140.0L264.7 143.2L255.9 138.9L245.0 142.1L247.2 149.8L247.2 158.5L246.1 167.2L242.9 169.4L240.7 162.9L235.2 158.5L227.6 155.2L223.2 149.8L225.4 143.2L230.9 135.6L234.1 130.2L235.2 121.4Z"/><path fill="#ff6600" fill-rule="evenodd" d="M197.4 217.9L198.8 225.3L205.6 226.0L206.2 231.5L212.4 231.5L213.1 234.9L214.0 234.9L214.0 235.1L223.3 235.1L224.0 237.6L224.2 237.7L224.2 237.9L232.4 241.3L234.0 242.9L234.9 244.0L235.2 244.0L237.9 247.4L246.7 246.0L246.0 252.2L239.9 255.6L241.3 261.7L248.1 261.0L249.4 254.9L255.6 252.2L256.9 245.3L264.4 244.0L265.8 239.9L263.9 237.5L260.7 236.9L255.0 238.3L248.3 240.7L241.7 241.7L239.7 239.7L239.2 239.5L239.0 239.0L239.0 239.0L237.9 237.9L237.9 232.3L237.6 230.8L237.5 229.3L237.2 224.3L236.4 225.5L232.1 224.5L227.4 224.0L222.1 226.9L222.1 215.4L232.1 213.5L237.4 214.5L238.3 222.6L237.2 224.3L238.2 225.9L238.2 226.3L238.5 227.9L239.0 230.8L239.2 230.8L239.2 231.0L241.1 231.7L247.4 231.7L256.0 232.1L266.4 233.6L269.3 236.4L267.3 237.5L267.8 241.9L276.0 240.6L276.0 235.1L272.6 233.8L270.6 227.6L260.3 226.3L259.7 222.9L253.5 222.9L252.8 219.5L248.9 215.0L249.5 215.0L246.0 211.2L247.4 208.3L252.2 202.6L256.0 194.0L244.0 194.0L217.2 194.0L211.7 194.0L206.4 194.0L206.2 194.0L206.2 194.1L202.2 196.5L202.2 194.0L178.3 194.0L181.0 196.7L181.7 202.2L184.4 206.9L189.2 211.7L194.3 211.7L195.9 215.0L196.8 215.0L197.4 217.9ZM194.0 198.8L191.3 198.8L191.3 196.7L201.8 196.7L201.6 196.9L194.0 197.8L194.0 198.8ZM210.3 206.3L216.5 206.3L215.8 211.7L211.7 213.8L210.3 206.3Z"/><path fill="#ff6600" fill-rule="evenodd" d="M709.4 217.9L710.8 225.3L717.6 226.0L718.2 231.5L724.4 231.5L725.1 234.9L726.0 234.9L726.0 235.1L735.3 235.1L736.0 237.6L736.2 237.7L736.2 237.9L744.4 241.3L746.0 242.9L746.9 244.0L747.2 244.0L749.9 247.4L758.7 246.0L758.0 252.2L751.9 255.6L753.3 261.7L760.1 261.0L761.4 254.9L767.6 252.2L768.9 245.3L776.4 244.0L777.8 239.9L775.9 237.5L772.7 236.9L767.0 238.3L760.3 240.7L753.7 241.7L751.7 239.7L751.2 239.5L751.0 239.0L751.0 239.0L749.9 237.9L749.9 232.3L749.6 230.8L749.5 229.3L749.2 224.3L748.4 225.5L744.1 224.5L739.4 224.0L734.1 226.9L734.1 215.4L744.1 213.5L749.4 214.5L750.3 222.6L749.2 224.3L750.2 225.9L750.2 226.3L750.5 227.9L751.0 230.8L751.2 230.8L751.2 231.0L753.1 231.7L759.4 231.7L768.0 232.1L778.4 233.6L781.3 236.4L779.3 237.5L779.8 241.9L788.0 240.6L788.0 235.1L784.6 233.8L782.6 227.6L772.3 226.3L771.7 222.9L765.5 222.9L764.8 219.5L760.9 215.0L761.5 215.0L758.0 211.2L759.4 208.3L764.2 202.6L768.0 194.0L756.0 194.0L729.2 194.0L723.7 194.0L718.4 194.0L718.2 194.0L718.2 194.1L714.2 196.5L714.2 194.0L690.3 194.0L693.0 196.7L693.7 202.2L696.4 206.9L701.2 211.7L706.3 211.7L707.9 215.0L708.8 215.0L709.4 217.9ZM706.0 198.8L703.3 198.8L703.3 196.7L713.8 196.7L713.6 196.9L706.0 197.8L706.0 198.8ZM722.3 206.3L728.5 206.3L727.8 211.7L723.7 213.8L722.3 206.3Z"/><path fill="#ff6600" fill-rule="evenodd" d="M421.0 194.4L420.3 201.0L423.9 208.2L424.0 208.5L426.8 215.6L430.3 217.9L439.1 220.8L443.9 220.8L443.6 220.4L443.4 220.0L443.2 219.7L443.0 219.3L439.9 209.9L436.0 203.4L431.0 202.2L430.7 202.1L430.3 201.9L430.0 201.8L429.7 201.6L429.4 201.3L429.2 201.1L428.9 200.8L428.7 200.5L428.5 200.2L428.4 199.9L428.3 199.5L428.2 199.2L428.1 198.8L428.1 198.5L428.1 193.7L421.5 192.8L421.0 194.4Z"/><path fill="#ff6600" fill-rule="evenodd" d="M412.8 236.2L420.4 236.2L418.0 235.0L412.8 235.0L412.8 236.2Z"/><path fill="#ff6600" fill-rule="evenodd" d="M350.2 202.9L350.4 202.6L350.7 202.3L350.9 202.1L351.2 201.9L351.6 201.7L351.9 201.5L352.2 201.4L352.6 201.3L362.1 199.4L363.5 199.1L363.1 198.9L362.8 198.7L362.4 198.5L362.2 198.2L361.9 197.9L361.7 197.6L361.5 197.3L361.3 197.0L361.2 196.6L361.1 196.2L361.0 195.9L361.0 195.5L361.0 190.7L361.0 190.3L361.1 190.0L361.1 189.6L361.3 189.3L361.4 189.0L361.6 188.7L361.8 188.4L362.0 188.1L362.3 187.8L362.6 187.6L362.9 187.4L363.2 187.3L363.5 187.1L363.9 187.0L364.2 186.9L370.9 186.0L371.3 186.0L371.7 186.0L372.0 186.0L372.4 186.1L372.7 186.2L373.1 186.3L373.4 186.5L373.7 186.7L374.0 186.9L374.3 187.2L374.5 187.5L374.7 187.8L374.9 188.1L375.0 188.4L375.1 188.8L375.2 189.1L376.2 194.9L376.2 195.2L376.2 195.6L376.2 196.0L376.1 196.3L376.0 196.7L375.9 197.0L375.7 197.4L375.5 197.7L375.3 198.0L375.0 198.2L374.7 198.5L374.4 198.7L374.1 198.9L372.8 199.5L373.1 199.7L373.5 199.9L373.8 200.1L374.1 200.3L374.3 200.6L374.6 200.9L374.8 201.3L375.0 201.6L376.8 206.0L377.0 206.0L378.1 201.0L377.2 192.0L377.2 191.7L377.2 191.3L377.3 190.9L377.4 190.6L377.5 190.2L377.6 189.9L377.8 189.6L378.1 189.3L378.3 189.0L380.2 187.1L380.5 186.8L380.8 186.6L381.1 186.4L381.4 186.3L381.8 186.1L382.1 186.0L382.5 186.0L382.9 186.0L383.2 186.0L383.6 186.0L383.9 186.1L384.3 186.2L384.6 186.4L385.0 186.6L385.3 186.8L385.5 187.0L385.8 187.3L386.0 187.6L386.2 187.9L386.4 188.2L386.5 188.6L388.2 193.6L391.5 197.7L396.1 202.3L396.3 202.6L396.5 202.9L396.7 203.2L396.9 203.5L399.7 210.2L405.0 210.2L406.6 208.4L409.6 203.9L409.6 199.2L405.3 195.6L401.9 193.0L396.5 190.3L396.1 190.1L395.8 189.9L395.6 189.7L395.3 189.4L395.1 189.1L394.9 188.8L394.7 188.5L394.6 188.1L394.5 187.8L394.4 187.4L394.4 187.1L394.4 186.7L394.4 186.3L394.5 186.0L394.9 184.1L395.1 183.7L395.2 183.4L395.4 183.0L395.6 182.7L395.8 182.4L396.1 182.1L396.4 181.9L396.7 181.7L397.1 181.5L397.4 181.4L397.8 181.3L398.2 181.2L398.5 181.2L398.9 181.2L399.3 181.3L399.7 181.3L400.0 181.5L402.4 182.4L402.7 182.5L405.4 183.9L405.9 181.5L405.9 181.1L406.1 180.7L406.2 180.4L406.4 180.0L406.6 179.7L406.9 179.4L407.2 179.2L407.5 179.0L407.8 178.8L408.2 178.6L408.5 178.5L408.9 178.4L409.3 178.3L409.7 178.3L410.0 178.4L410.4 178.4L410.8 178.5L413.1 179.3L413.7 179.3L413.7 179.2L410.9 178.0L410.5 177.8L410.2 177.6L409.9 177.4L409.7 177.1L409.4 176.8L409.2 176.5L409.0 176.2L408.9 175.8L408.8 175.5L408.7 175.1L408.7 174.8L408.7 174.6L405.7 175.3L405.4 175.4L405.0 175.4L404.6 175.4L404.2 175.4L401.8 175.0L400.8 178.0L400.7 178.4L400.5 178.7L400.3 179.0L400.1 179.3L399.8 179.6L399.5 179.9L399.2 180.1L398.9 180.3L398.5 180.4L398.2 180.6L397.8 180.6L397.4 180.7L397.0 180.7L396.7 180.6L396.3 180.6L394.4 180.1L394.0 180.0L393.7 179.8L393.3 179.7L393.0 179.4L392.7 179.2L392.4 178.9L392.2 178.6L392.0 178.3L391.8 178.0L391.7 177.6L391.6 177.3L391.5 176.9L390.6 169.3L390.5 168.9L390.5 168.5L390.6 168.2L390.7 167.8L390.8 167.5L390.9 167.1L391.1 166.8L391.3 166.5L391.5 166.2L391.8 165.9L392.1 165.7L392.4 165.5L392.7 165.3L393.1 165.2L393.4 165.1L394.4 164.9L394.2 164.8L393.8 164.7L393.5 164.5L393.1 164.3L392.8 164.1L392.6 163.8L392.3 163.5L392.1 163.2L391.9 162.9L391.7 162.5L391.6 162.2L391.5 161.8L391.1 159.2L390.3 159.2L386.5 160.8L382.0 163.5L381.7 163.6L381.3 163.8L381.0 163.9L380.6 164.0L380.2 164.0L379.9 164.0L379.5 164.0L379.1 163.9L378.8 163.8L378.4 163.6L378.1 163.5L377.8 163.3L377.5 163.0L377.2 162.8L377.0 162.5L376.8 162.2L376.6 161.8L376.5 161.5L376.4 161.3L376.2 163.4L376.1 163.8L376.0 164.2L375.9 164.5L375.8 164.9L375.6 165.2L375.3 165.5L375.1 165.8L374.8 166.0L374.5 166.2L374.2 166.4L373.9 166.6L373.5 166.7L373.2 166.8L372.8 166.8L368.7 167.3L363.6 169.8L363.3 170.0L362.9 170.1L362.5 170.2L362.1 170.2L361.7 170.2L361.3 170.2L358.4 169.7L358.1 169.6L357.7 169.5L357.4 169.3L357.0 169.1L356.7 168.9L356.4 168.7L356.2 168.4L355.9 168.1L355.7 167.8L355.6 167.4L355.4 167.1L355.4 166.7L354.2 161.4L352.9 160.3L352.6 160.1L352.3 159.8L352.1 159.5L351.9 159.1L351.7 158.8L351.6 158.4L351.6 158.4L349.3 165.2L349.2 165.6L349.0 165.9L348.8 166.3L348.5 166.6L348.2 166.9L347.9 167.1L347.6 167.3L346.5 167.9L346.6 168.8L350.5 168.8L350.9 168.8L351.2 168.9L351.6 169.0L351.9 169.1L352.3 169.2L352.6 169.4L352.9 169.7L353.2 169.9L357.9 174.7L359.4 176.1L362.7 177.8L363.0 178.0L363.3 178.2L363.6 178.4L363.8 178.7L364.1 179.0L364.3 179.3L364.4 179.6L364.6 180.0L364.7 180.3L364.7 180.7L364.8 181.0L364.8 181.4L364.7 181.8L364.6 182.1L364.5 182.5L364.4 182.8L364.2 183.2L364.0 183.5L363.8 183.8L363.5 184.0L363.2 184.2L362.9 184.5L362.6 184.6L362.2 184.8L361.9 184.9L361.5 184.9L355.7 185.8L354.9 186.3L354.2 189.5L354.1 189.9L354.0 190.3L353.8 190.6L353.7 190.9L353.4 191.2L353.2 191.5L352.9 191.7L352.6 191.9L352.3 192.1L352.0 192.3L351.6 192.4L351.3 192.5L350.9 192.6L345.7 193.2L345.7 198.1L347.0 200.0L347.2 200.4L347.3 200.7L347.5 201.0L347.5 201.4L347.6 201.8L347.6 202.2L347.6 206.8L350.2 202.9Z"/><path fill="#ff6600" fill-rule="evenodd" d="M377.0 156.7L376.9 156.7L376.8 157.6L377.0 156.7Z"/><path fill="#ff6600" fill-rule="evenodd" d="M421.5 195.7L421.4 196.1L421.4 196.4L420.2 201.0L422.4 207.6L424.8 209.8L431.2 207.9L430.8 203.9L428.2 202.8L427.9 202.7L427.5 202.5L427.2 202.3L426.9 202.0L426.7 201.7L426.5 201.4L426.3 201.1L426.1 200.8L426.0 200.4L425.9 200.1L425.8 199.7L425.8 199.3L425.8 198.9L425.9 198.6L426.0 198.2L426.1 197.8L426.3 197.5L426.4 197.2L426.7 196.9L426.9 196.6L427.9 195.7L427.9 194.9L424.7 193.5L421.7 193.1L421.5 195.7Z"/><path fill="#ff6600" fill-rule="evenodd" d="M454.7 214.0L455.0 213.8L455.3 213.6L455.6 213.4L456.0 213.3L456.3 213.2L456.7 213.1L457.1 213.1L457.4 213.1L457.8 213.1L458.2 213.2L458.5 213.3L458.9 213.5L459.2 213.7L459.5 213.9L459.8 214.1L460.0 214.4L460.3 214.7L460.5 215.0L460.6 215.3L460.8 215.7L460.9 216.0L460.9 216.4L461.0 216.8L461.0 217.1L460.9 217.5L460.1 222.2L462.5 228.5L466.0 233.8L466.2 234.2L466.4 234.5L466.5 234.9L469.1 243.5L470.1 244.4L469.6 240.2L469.6 239.8L469.6 239.4L469.7 239.0L469.8 238.6L471.7 232.8L471.8 232.5L472.0 232.1L472.2 231.8L472.4 231.5L472.7 231.2L473.0 231.0L473.4 230.8L473.7 230.6L474.1 230.4L475.7 229.9L476.9 228.1L477.2 227.8L480.0 224.4L480.3 224.1L480.6 223.9L480.9 223.7L481.2 223.5L481.6 223.3L481.9 223.2L482.3 223.1L482.7 223.1L487.3 222.8L486.9 218.2L486.8 218.3L486.6 218.6L486.3 218.8L486.0 219.0L485.7 219.2L485.4 219.4L485.1 219.5L484.7 219.6L484.3 219.7L484.0 219.7L483.6 219.7L483.2 219.7L482.9 219.6L482.5 219.5L475.2 216.7L470.7 215.8L470.3 215.7L470.0 215.6L469.6 215.4L469.3 215.2L469.0 215.0L468.7 214.7L468.4 214.4L468.2 214.1L465.3 209.3L465.1 208.9L465.0 208.5L464.0 205.4L457.1 205.4L457.1 207.3L457.1 207.7L457.1 208.1L457.0 208.5L456.8 208.8L456.7 209.2L456.5 209.5L456.3 209.8L456.0 210.1L455.7 210.3L455.4 210.5L455.1 210.7L454.7 210.9L454.4 211.0L454.0 211.1L454.1 214.5L454.7 214.0Z"/><path fill="#ff6600" fill-rule="evenodd" d="M-16.2 230.2L-13.8 230.2L-13.5 230.3L-13.1 230.3L-12.7 230.4L-12.4 230.5L-12.1 230.7L-11.7 230.9L-11.4 231.1L-11.2 231.4L-7.3 235.2L-7.1 235.4L-3.5 239.8L-2.9 239.8L-2.4 235.5L-2.3 235.1L-2.2 234.8L-2.1 234.4L-1.9 234.1L-1.7 233.8L-1.5 233.5L-1.3 233.2L-1.0 233.0L-0.7 232.8L0.5 232.0L0.5 227.4L0.5 227.0L0.5 226.6L0.6 226.3L0.8 225.9L0.9 225.6L1.1 225.3L1.3 225.0L1.6 224.7L1.9 224.4L2.2 224.2L2.5 224.0L2.8 223.9L3.2 223.7L3.5 223.6L3.9 223.6L4.3 223.6L9.0 223.6L9.4 223.6L9.8 223.6L10.1 223.7L10.5 223.9L10.8 224.0L11.1 224.2L11.4 224.4L11.7 224.7L16.5 229.4L16.7 229.7L16.8 229.9L16.7 225.6L16.7 225.1L17.6 215.5L17.6 215.5L18.6 206.9L18.7 206.6L18.7 206.2L18.9 205.9L19.0 205.5L19.2 205.2L19.4 204.9L19.7 204.7L19.9 204.4L20.2 204.2L20.5 204.0L20.9 203.9L21.2 203.7L21.6 203.6L21.9 203.6L22.3 203.5L22.6 203.6L23.0 203.6L24.2 203.8L24.2 197.8L8.0 197.8L8.9 201.8L9.0 202.1L9.0 202.5L9.0 202.9L9.0 203.2L8.9 203.6L6.0 214.1L5.9 214.4L5.8 214.8L3.8 218.6L3.6 218.9L3.4 219.3L3.1 219.6L-2.6 225.3L-2.9 225.5L-3.2 225.8L-3.5 225.9L-3.8 226.1L-4.2 226.2L-4.5 226.3L-4.9 226.4L-5.3 226.4L-5.6 226.4L-6.0 226.3L-6.4 226.2L-6.7 226.1L-7.1 225.9L-7.4 225.8L-7.7 225.5L-8.0 225.3L-8.2 225.0L-8.4 224.7L-8.6 224.4L-8.8 224.1L-8.9 223.7L-9.0 223.3L-9.1 223.0L-9.1 222.6L-9.1 221.4L-9.8 221.5L-16.2 224.9L-16.2 230.2Z"/><path fill="#ff6600" fill-rule="evenodd" d="M495.8 230.2L498.2 230.2L498.5 230.3L498.9 230.3L499.3 230.4L499.6 230.5L499.9 230.7L500.3 230.9L500.6 231.1L500.8 231.4L504.7 235.2L504.9 235.4L508.5 239.8L509.1 239.8L509.6 235.5L509.7 235.1L509.8 234.8L509.9 234.4L510.1 234.1L510.3 233.8L510.5 233.5L510.7 233.2L511.0 233.0L511.3 232.8L512.5 232.0L512.5 227.4L512.5 227.0L512.5 226.6L512.6 226.3L512.8 225.9L512.9 225.6L513.1 225.3L513.3 225.0L513.6 224.7L513.9 224.4L514.2 224.2L514.5 224.0L514.8 223.9L515.2 223.7L515.5 223.6L515.9 223.6L516.3 223.6L521.0 223.6L521.4 223.6L521.8 223.6L522.1 223.7L522.5 223.9L522.8 224.0L523.1 224.2L523.4 224.4L523.7 224.7L528.5 229.4L528.7 229.7L528.8 229.9L528.7 225.6L528.7 225.1L529.6 215.5L529.6 215.5L530.6 206.9L530.7 206.6L530.7 206.2L530.9 205.9L531.0 205.5L531.2 205.2L531.4 204.9L531.7 204.7L531.9 204.4L532.2 204.2L532.5 204.0L532.9 203.9L533.2 203.7L533.6 203.6L533.9 203.6L534.3 203.5L534.6 203.6L535.0 203.6L536.2 203.8L536.2 197.8L520.0 197.8L520.9 201.8L521.0 202.1L521.0 202.5L521.0 202.9L521.0 203.2L520.9 203.6L518.0 214.1L517.9 214.4L517.8 214.8L515.8 218.6L515.6 218.9L515.4 219.3L515.1 219.6L509.4 225.3L509.1 225.5L508.8 225.8L508.5 225.9L508.2 226.1L507.8 226.2L507.5 226.3L507.1 226.4L506.7 226.4L506.4 226.4L506.0 226.3L505.6 226.2L505.3 226.1L504.9 225.9L504.6 225.8L504.3 225.5L504.0 225.3L503.8 225.0L503.6 224.7L503.4 224.4L503.2 224.1L503.1 223.7L503.0 223.3L502.9 223.0L502.9 222.6L502.9 221.4L502.2 221.5L495.8 224.9L495.8 230.2Z"/><path fill="#ff6600" fill-rule="evenodd" d="M20.1 245.5L23.2 245.5L22.2 242.0L20.1 241.6L19.8 241.5L20.1 245.5Z"/><path fill="#ff6600" fill-rule="evenodd" d="M532.1 245.5L535.2 245.5L534.2 242.0L532.1 241.6L531.8 241.5L532.1 245.5Z"/><path fill="#ff6600" fill-rule="evenodd" d="M499.1 250.6L501.6 258.1L503.0 260.2L504.9 260.2L504.9 260.1L504.8 259.8L504.8 255.5L503.1 254.6L502.8 254.4L502.5 254.2L502.2 254.0L502.0 253.7L501.7 253.4L501.5 253.1L501.4 252.7L501.2 252.4L499.2 246.4L499.1 246.4L499.1 250.6Z"/><path fill="#ff6600" fill-rule="evenodd" d="M6.1 194.9L8.4 198.8L8.6 199.1L8.7 199.4L8.8 199.8L8.9 200.1L9.0 200.5L9.0 200.9L8.9 201.2L8.0 207.9L7.9 208.3L7.8 208.6L7.7 208.9L7.5 209.2L2.8 217.8L2.5 218.2L1.1 220.2L18.3 220.2L17.6 207.6L17.6 207.2L17.6 206.8L17.7 206.5L18.6 202.6L18.7 202.3L18.9 202.0L19.1 201.6L19.3 201.3L19.5 201.0L19.7 200.8L20.0 200.5L20.3 200.3L20.7 200.2L21.0 200.0L21.3 199.9L21.7 199.8L22.1 199.8L22.4 199.8L22.8 199.8L23.2 199.9L23.5 200.0L23.9 200.1L24.2 200.3L24.5 200.5L24.8 200.7L25.1 200.9L25.3 201.2L25.5 201.5L25.7 201.8L25.9 202.2L26.0 202.5L26.1 202.9L26.4 205.0L33.3 205.0L37.3 204.1L33.1 204.5L32.8 204.5L32.4 204.5L32.0 204.4L31.7 204.3L31.3 204.2L31.0 204.1L30.7 203.9L30.4 203.6L30.1 203.4L29.9 203.1L29.6 202.8L29.5 202.5L29.3 202.2L29.2 201.8L29.1 201.5L28.4 198.2L26.9 197.2L26.6 197.0L26.3 196.7L26.1 196.5L25.8 196.2L25.7 195.9L25.5 195.5L25.4 195.2L25.3 194.8L25.2 194.5L25.2 194.1L25.2 193.7L25.2 193.4L25.3 193.0L25.4 192.7L25.6 192.3L27.0 189.5L27.2 189.1L27.4 188.8L27.7 188.5L28.0 188.3L28.3 188.0L28.6 187.8L29.0 187.7L29.4 187.5L29.7 187.4L30.1 187.4L32.1 187.2L32.0 187.2L31.8 186.9L31.6 186.6L31.4 186.3L31.2 186.0L31.1 185.6L31.0 185.3L30.9 184.9L30.9 184.5L30.9 182.1L28.7 181.8L25.2 183.5L21.9 190.0L21.7 190.4L21.5 190.7L21.2 191.0L17.4 194.8L17.1 195.1L16.8 195.3L16.5 195.5L16.2 195.6L15.8 195.8L15.5 195.9L15.1 195.9L14.7 195.9L14.4 195.9L8.7 195.4L8.3 195.4L7.9 195.3L7.6 195.2L7.2 195.0L6.9 194.8L6.6 194.6L6.3 194.3L6.1 194.1L6.1 194.9Z"/><path fill="#ff6600" fill-rule="evenodd" d="M518.1 194.9L520.4 198.8L520.6 199.1L520.7 199.4L520.8 199.8L520.9 200.1L521.0 200.5L521.0 200.9L520.9 201.2L520.0 207.9L519.9 208.3L519.8 208.6L519.7 208.9L519.5 209.2L514.8 217.8L514.5 218.2L513.1 220.2L530.3 220.2L529.6 207.6L529.6 207.2L529.6 206.8L529.7 206.5L530.6 202.6L530.7 202.3L530.9 202.0L531.1 201.6L531.3 201.3L531.5 201.0L531.7 200.8L532.0 200.5L532.3 200.3L532.7 200.2L533.0 200.0L533.3 199.9L533.7 199.8L534.1 199.8L534.4 199.8L534.8 199.8L535.2 199.9L535.5 200.0L535.9 200.1L536.2 200.3L536.5 200.5L536.8 200.7L537.1 200.9L537.3 201.2L537.5 201.5L537.7 201.8L537.9 202.2L538.0 202.5L538.1 202.9L538.4 205.0L545.3 205.0L549.3 204.1L545.1 204.5L544.8 204.5L544.4 204.5L544.0 204.4L543.7 204.3L543.3 204.2L543.0 204.1L542.7 203.9L542.4 203.6L542.1 203.4L541.9 203.1L541.6 202.8L541.5 202.5L541.3 202.2L541.2 201.8L541.1 201.5L540.4 198.2L538.9 197.2L538.6 197.0L538.3 196.7L538.1 196.5L537.8 196.2L537.7 195.9L537.5 195.5L537.4 195.2L537.3 194.8L537.2 194.5L537.2 194.1L537.2 193.7L537.2 193.4L537.3 193.0L537.4 192.7L537.6 192.3L539.0 189.5L539.2 189.1L539.4 188.8L539.7 188.5L540.0 188.3L540.3 188.0L540.6 187.8L541.0 187.7L541.4 187.5L541.7 187.4L542.1 187.4L544.1 187.2L544.0 187.2L543.8 186.9L543.6 186.6L543.4 186.3L543.2 186.0L543.1 185.6L543.0 185.3L542.9 184.9L542.9 184.5L542.9 182.1L540.7 181.8L537.2 183.5L533.9 190.0L533.7 190.4L533.5 190.7L533.2 191.0L529.4 194.8L529.1 195.1L528.8 195.3L528.5 195.5L528.2 195.6L527.8 195.8L527.5 195.9L527.1 195.9L526.7 195.9L526.4 195.9L520.7 195.4L520.3 195.4L519.9 195.3L519.6 195.2L519.2 195.0L518.9 194.8L518.6 194.6L518.3 194.3L518.1 194.1L518.1 194.9Z"/><path fill="#ff6600" fill-rule="evenodd" d="M213.8 185.5L217.7 185.5L218.0 185.5L218.4 185.5L218.8 185.6L219.1 185.8L219.5 185.9L219.8 186.1L220.1 186.3L220.4 186.6L220.6 186.9L220.8 187.2L221.0 187.5L221.2 187.8L221.3 188.2L221.4 188.5L221.4 188.9L221.5 189.3L221.5 191.2L254.9 191.2L253.7 189.7L253.5 189.4L253.3 189.1L253.2 188.7L253.1 188.3L253.0 188.0L253.0 187.6L253.0 187.2L253.0 186.8L253.1 186.4L253.2 186.1L253.3 185.7L253.5 185.4L253.7 185.1L254.0 184.8L254.2 184.5L254.5 184.3L254.9 184.1L255.2 183.9L255.5 183.8L255.8 183.7L255.8 182.3L254.5 182.2L250.5 183.7L250.2 183.9L249.9 183.9L249.5 184.0L249.1 184.0L248.8 184.0L248.4 184.0L248.1 183.9L247.7 183.8L247.4 183.6L244.6 182.2L244.2 182.0L243.9 181.8L243.6 181.5L243.4 181.3L243.2 181.0L243.0 180.7L242.8 180.3L242.7 180.0L242.6 179.6L242.3 178.3L241.5 178.3L238.9 182.0L238.6 182.3L238.3 182.5L238.0 182.8L237.7 183.0L237.4 183.2L237.0 183.3L236.7 183.4L236.3 183.5L235.9 183.5L235.5 183.5L235.2 183.5L234.8 183.4L234.4 183.3L234.1 183.1L232.2 182.2L231.9 182.0L231.6 181.8L231.3 181.6L231.0 181.3L230.8 181.0L230.6 180.7L230.4 180.4L230.3 180.1L230.2 179.7L230.0 178.8L222.9 178.8L222.5 178.8L222.2 178.7L221.8 178.6L221.4 178.5L221.1 178.3L220.8 178.1L220.5 177.9L220.2 177.6L219.9 177.3L219.7 177.0L219.5 176.7L219.4 176.4L219.3 176.0L219.1 175.4L213.9 175.4L213.8 175.4L213.8 185.5Z"/><path fill="#ff6600" d="M59.0 242.6h6.2v6.2h-6.2ZM67.7 243.4h6.2v6.2h-6.2ZM74.6 245.9h6.2v6.2h-6.2ZM86.0 243.1h6.2v6.2h-6.2ZM89.3 251.3h6.2v6.2h-6.2ZM80.3 254.1h6.2v6.2h-6.2ZM28.8 270.9h6.2v6.2h-6.2ZM70.5 266.7h6.2v6.2h-6.2ZM97.4 265.5h6.2v6.2h-6.2ZM16.5 279.1h6.2v6.2h-6.2ZM11.3 282.7h6.2v6.2h-6.2ZM32.9 288.1h6.2v6.2h-6.2ZM50.0 277.8h6.2v6.2h-6.2ZM51.7 281.0h6.2v6.2h-6.2ZM56.6 287.3h6.2v6.2h-6.2ZM60.7 294.1h6.2v6.2h-6.2ZM80.3 275.8h6.2v6.2h-6.2ZM81.9 278.6h6.2v6.2h-6.2ZM79.5 285.6h6.2v6.2h-6.2ZM95.8 279.1h6.2v6.2h-6.2ZM81.6 296.6h6.2v6.2h-6.2ZM8.0 301.1h6.2v6.2h-6.2ZM43.5 301.1h6.2v6.2h-6.2ZM39.7 306.4h6.2v6.2h-6.2ZM54.1 302.3h6.2v6.2h-6.2ZM57.4 304.7h6.2v6.2h-6.2ZM48.9 311.3h6.2v6.2h-6.2ZM52.5 320.6h6.2v6.2h-6.2ZM91.7 309.6h6.2v6.2h-6.2ZM92.5 315.4h6.2v6.2h-6.2ZM87.6 321.9h6.2v6.2h-6.2ZM85.2 326.8h6.2v6.2h-6.2ZM-5.3 176.9h6.2v6.2h-6.2ZM-2.6 201.1h6.2v6.2h-6.2ZM-9.1 207.9h6.2v6.2h-6.2ZM-5.3 208.6h6.2v6.2h-6.2ZM1.8 189.5h6.2v6.2h-6.2ZM8.3 190.9h6.2v6.2h-6.2ZM14.1 192.3h6.2v6.2h-6.2ZM18.2 188.2h6.2v6.2h-6.2ZM21.6 180.0h6.2v6.2h-6.2ZM28.4 178.6h6.2v6.2h-6.2ZM31.1 184.8h6.2v6.2h-6.2ZM26.4 194.3h6.2v6.2h-6.2ZM4.6 199.1h6.2v6.2h-6.2ZM14.1 197.7h6.2v6.2h-6.2ZM23.6 201.8h6.2v6.2h-6.2ZM29.1 201.8h6.2v6.2h-6.2ZM35.2 200.4h6.2v6.2h-6.2ZM42.0 197.7h6.2v6.2h-6.2ZM43.4 194.3h6.2v6.2h-6.2ZM44.1 185.4h6.2v6.2h-6.2ZM4.6 207.2h6.2v6.2h-6.2ZM10.0 206.6h6.2v6.2h-6.2ZM16.1 207.2h6.2v6.2h-6.2ZM5.9 212.0h6.2v6.2h-6.2ZM14.8 211.3h6.2v6.2h-6.2ZM-0.9 216.8h6.2v6.2h-6.2ZM4.6 218.8h6.2v6.2h-6.2ZM14.8 217.5h6.2v6.2h-6.2ZM-4.3 222.2h6.2v6.2h-6.2ZM4.6 222.9h6.2v6.2h-6.2ZM14.1 223.6h6.2v6.2h-6.2ZM-7.0 225.9h6.2v6.2h-6.2ZM-2.9 227.0h6.2v6.2h-6.2ZM-2.2 230.4h6.2v6.2h-6.2ZM-6.3 237.3h6.2v6.2h-6.2ZM-9.1 250.9h6.2v6.2h-6.2ZM-8.4 257.0h6.2v6.2h-6.2ZM-5.7 261.8h6.2v6.2h-6.2ZM-0.2 263.8h6.2v6.2h-6.2ZM5.9 265.2h6.2v6.2h-6.2ZM12.7 260.4h6.2v6.2h-6.2ZM21.6 265.2h6.2v6.2h-6.2ZM14.1 227.0h6.2v6.2h-6.2ZM14.1 232.5h6.2v6.2h-6.2ZM18.9 238.6h6.2v6.2h-6.2ZM16.1 243.4h6.2v6.2h-6.2ZM22.3 243.4h6.2v6.2h-6.2ZM33.9 242.7h6.2v6.2h-6.2ZM39.3 240.0h6.2v6.2h-6.2ZM49.5 232.5h6.2v6.2h-6.2ZM7.3 245.4h6.2v6.2h-6.2ZM-0.2 251.2h6.2v6.2h-6.2ZM46.8 258.4h6.2v6.2h-6.2ZM51.6 266.6h6.2v6.2h-6.2ZM-9.1 165.7h6.2v6.2h-6.2ZM23.5 198.6h6.2v6.2h-6.2ZM31.3 198.6h6.2v6.2h-6.2ZM39.1 196.6h6.2v6.2h-6.2ZM21.6 183.0h6.2v6.2h-6.2ZM25.5 179.1h6.2v6.2h-6.2ZM13.7 188.8h6.2v6.2h-6.2ZM17.7 202.5h6.2v6.2h-6.2ZM132.0 106.1h6.2v6.2h-6.2ZM143.5 110.6h6.2v6.2h-6.2ZM219.8 89.5h6.2v6.2h-6.2ZM376.6 67.8h6.2v6.2h-6.2ZM381.9 113.1h6.2v6.2h-6.2ZM397.2 112.6h6.2v6.2h-6.2ZM401.9 115.5h6.2v6.2h-6.2ZM282.8 123.8h6.2v6.2h-6.2ZM290.1 142.7h6.2v6.2h-6.2ZM323.6 133.4h6.2v6.2h-6.2ZM119.2 132.1h6.2v6.2h-6.2ZM124.7 143.5h6.2v6.2h-6.2ZM144.5 131.1h6.2v6.2h-6.2ZM141.4 142.6h6.2v6.2h-6.2ZM137.8 152.0h6.2v6.2h-6.2ZM162.8 143.9h6.2v6.2h-6.2ZM128.5 221.2h6.2v6.2h-6.2ZM134.2 224.5h6.2v6.2h-6.2ZM232.0 125.1h6.2v6.2h-6.2ZM257.3 134.6h6.2v6.2h-6.2ZM191.9 138.6h6.2v6.2h-6.2ZM262.7 204.7h6.2v6.2h-6.2ZM318.0 195.4h6.2v6.2h-6.2ZM330.6 204.0h6.2v6.2h-6.2ZM383.9 120.5h6.2v6.2h-6.2ZM391.2 125.1h6.2v6.2h-6.2ZM401.0 230.5h6.2v6.2h-6.2ZM264.1 265.7h6.2v6.2h-6.2ZM245.1 270.5h6.2v6.2h-6.2ZM252.7 271.9h6.2v6.2h-6.2ZM255.5 277.6h6.2v6.2h-6.2ZM264.1 278.6h6.2v6.2h-6.2ZM272.7 276.7h6.2v6.2h-6.2ZM285.1 276.7h6.2v6.2h-6.2ZM571.0 242.6h6.2v6.2h-6.2ZM579.7 243.4h6.2v6.2h-6.2ZM586.6 245.9h6.2v6.2h-6.2ZM598.0 243.1h6.2v6.2h-6.2ZM601.3 251.3h6.2v6.2h-6.2ZM592.3 254.1h6.2v6.2h-6.2ZM131.0 250.5h6.2v6.2h-6.2ZM540.8 270.9h6.2v6.2h-6.2ZM582.5 266.7h6.2v6.2h-6.2ZM609.4 265.5h6.2v6.2h-6.2ZM528.5 279.1h6.2v6.2h-6.2ZM523.3 282.7h6.2v6.2h-6.2ZM544.9 288.1h6.2v6.2h-6.2ZM562.0 277.8h6.2v6.2h-6.2ZM563.7 281.0h6.2v6.2h-6.2ZM568.6 287.3h6.2v6.2h-6.2ZM572.7 294.1h6.2v6.2h-6.2ZM592.3 275.8h6.2v6.2h-6.2ZM593.9 278.6h6.2v6.2h-6.2ZM591.5 285.6h6.2v6.2h-6.2ZM607.8 279.1h6.2v6.2h-6.2ZM110.5 272.9h6.2v6.2h-6.2ZM113.0 281.0h6.2v6.2h-6.2ZM105.6 284.3h6.2v6.2h-6.2ZM106.4 280.2h6.2v6.2h-6.2ZM127.7 284.0h6.2v6.2h-6.2ZM142.1 278.6h6.2v6.2h-6.2ZM593.6 296.6h6.2v6.2h-6.2ZM520.0 301.1h6.2v6.2h-6.2ZM555.5 301.1h6.2v6.2h-6.2ZM551.7 306.4h6.2v6.2h-6.2ZM566.1 302.3h6.2v6.2h-6.2ZM569.4 304.7h6.2v6.2h-6.2ZM560.9 311.3h6.2v6.2h-6.2ZM564.5 320.6h6.2v6.2h-6.2ZM603.7 309.6h6.2v6.2h-6.2ZM604.5 315.4h6.2v6.2h-6.2ZM599.6 321.9h6.2v6.2h-6.2ZM597.2 326.8h6.2v6.2h-6.2ZM199.0 293.3h6.2v6.2h-6.2ZM254.6 284.3h6.2v6.2h-6.2ZM254.6 287.6h6.2v6.2h-6.2ZM260.3 281.0h6.2v6.2h-6.2ZM261.9 288.4h6.2v6.2h-6.2ZM261.9 292.5h6.2v6.2h-6.2ZM273.4 281.0h6.2v6.2h-6.2ZM277.4 282.7h6.2v6.2h-6.2ZM275.0 289.2h6.2v6.2h-6.2ZM294.6 282.7h6.2v6.2h-6.2ZM291.3 287.6h6.2v6.2h-6.2ZM286.4 290.8h6.2v6.2h-6.2ZM284.8 294.1h6.2v6.2h-6.2ZM281.5 297.4h6.2v6.2h-6.2ZM253.7 303.1h6.2v6.2h-6.2ZM257.0 302.3h6.2v6.2h-6.2ZM250.5 309.6h6.2v6.2h-6.2ZM252.1 317.8h6.2v6.2h-6.2ZM263.5 299.8h6.2v6.2h-6.2ZM268.4 302.3h6.2v6.2h-6.2ZM273.4 305.6h6.2v6.2h-6.2ZM275.0 308.8h6.2v6.2h-6.2ZM272.5 312.1h6.2v6.2h-6.2ZM252.1 335.8h6.2v6.2h-6.2ZM254.6 339.9h6.2v6.2h-6.2ZM257.8 344.0h6.2v6.2h-6.2ZM293.0 259.0h6.2v6.2h-6.2ZM300.3 258.2h6.2v6.2h-6.2ZM304.4 263.1h6.2v6.2h-6.2ZM305.2 266.3h6.2v6.2h-6.2ZM300.3 271.2h6.2v6.2h-6.2ZM387.1 261.4h6.2v6.2h-6.2ZM373.2 266.3h6.2v6.2h-6.2ZM377.3 271.2h6.2v6.2h-6.2ZM396.1 256.5h6.2v6.2h-6.2ZM400.2 253.2h6.2v6.2h-6.2ZM404.3 252.4h6.2v6.2h-6.2ZM419.8 271.2h6.2v6.2h-6.2ZM422.3 280.7h6.2v6.2h-6.2ZM436.7 283.0h6.2v6.2h-6.2ZM393.7 269.6h6.2v6.2h-6.2ZM395.3 274.5h6.2v6.2h-6.2ZM402.7 272.9h6.2v6.2h-6.2ZM404.3 276.1h6.2v6.2h-6.2ZM391.2 279.4h6.2v6.2h-6.2ZM396.1 281.0h6.2v6.2h-6.2ZM399.4 280.2h6.2v6.2h-6.2ZM379.8 285.9h6.2v6.2h-6.2ZM391.2 289.2h6.2v6.2h-6.2ZM396.1 289.2h6.2v6.2h-6.2ZM401.0 291.7h6.2v6.2h-6.2ZM393.7 295.8h6.2v6.2h-6.2ZM398.6 298.2h6.2v6.2h-6.2ZM381.1 304.7h6.2v6.2h-6.2ZM391.2 304.7h6.2v6.2h-6.2ZM195.6 145.8h6.2v6.2h-6.2ZM506.7 176.9h6.2v6.2h-6.2ZM501.9 197.7h6.2v6.2h-6.2ZM509.4 201.1h6.2v6.2h-6.2ZM502.9 207.9h6.2v6.2h-6.2ZM506.7 208.6h6.2v6.2h-6.2ZM500.9 216.8h6.2v6.2h-6.2ZM491.4 221.6h6.2v6.2h-6.2ZM485.9 210.0h6.2v6.2h-6.2ZM485.9 216.8h6.2v6.2h-6.2ZM513.8 189.5h6.2v6.2h-6.2ZM520.3 190.9h6.2v6.2h-6.2ZM526.1 192.3h6.2v6.2h-6.2ZM530.2 188.2h6.2v6.2h-6.2ZM533.6 180.0h6.2v6.2h-6.2ZM540.4 178.6h6.2v6.2h-6.2ZM543.1 184.8h6.2v6.2h-6.2ZM538.4 194.3h6.2v6.2h-6.2ZM516.6 199.1h6.2v6.2h-6.2ZM526.1 197.7h6.2v6.2h-6.2ZM535.6 201.8h6.2v6.2h-6.2ZM541.1 201.8h6.2v6.2h-6.2ZM547.2 200.4h6.2v6.2h-6.2ZM554.0 197.7h6.2v6.2h-6.2ZM555.4 194.3h6.2v6.2h-6.2ZM556.1 185.4h6.2v6.2h-6.2ZM516.6 207.2h6.2v6.2h-6.2ZM522.0 206.6h6.2v6.2h-6.2ZM528.1 207.2h6.2v6.2h-6.2ZM517.9 212.0h6.2v6.2h-6.2ZM526.8 211.3h6.2v6.2h-6.2ZM511.1 216.8h6.2v6.2h-6.2ZM516.6 218.8h6.2v6.2h-6.2ZM526.8 217.5h6.2v6.2h-6.2ZM507.7 222.2h6.2v6.2h-6.2ZM516.6 222.9h6.2v6.2h-6.2ZM526.1 223.6h6.2v6.2h-6.2ZM496.1 225.9h6.2v6.2h-6.2ZM505.0 225.9h6.2v6.2h-6.2ZM485.9 221.9h6.2v6.2h-6.2ZM498.2 221.9h6.2v6.2h-6.2ZM492.0 228.4h6.2v6.2h-6.2ZM498.8 227.7h6.2v6.2h-6.2ZM509.1 227.0h6.2v6.2h-6.2ZM509.8 230.4h6.2v6.2h-6.2ZM498.8 234.5h6.2v6.2h-6.2ZM505.7 237.3h6.2v6.2h-6.2ZM494.8 241.3h6.2v6.2h-6.2ZM498.2 243.4h6.2v6.2h-6.2ZM494.8 248.2h6.2v6.2h-6.2ZM502.9 250.9h6.2v6.2h-6.2ZM497.5 254.3h6.2v6.2h-6.2ZM503.6 257.0h6.2v6.2h-6.2ZM506.3 261.8h6.2v6.2h-6.2ZM511.8 263.8h6.2v6.2h-6.2ZM517.9 265.2h6.2v6.2h-6.2ZM524.7 260.4h6.2v6.2h-6.2ZM533.6 265.2h6.2v6.2h-6.2ZM492.0 269.3h6.2v6.2h-6.2ZM526.1 227.0h6.2v6.2h-6.2ZM526.1 232.5h6.2v6.2h-6.2ZM530.9 238.6h6.2v6.2h-6.2ZM528.1 243.4h6.2v6.2h-6.2ZM534.3 243.4h6.2v6.2h-6.2ZM545.9 242.7h6.2v6.2h-6.2ZM551.3 240.0h6.2v6.2h-6.2ZM561.5 232.5h6.2v6.2h-6.2ZM519.3 245.4h6.2v6.2h-6.2ZM511.8 251.2h6.2v6.2h-6.2ZM558.8 258.4h6.2v6.2h-6.2ZM563.6 266.6h6.2v6.2h-6.2ZM410.0 177.3h6.2v6.2h-6.2ZM417.5 175.9h6.2v6.2h-6.2ZM444.7 179.6h6.2v6.2h-6.2ZM453.6 188.8h6.2v6.2h-6.2ZM462.5 184.8h6.2v6.2h-6.2ZM463.1 191.6h6.2v6.2h-6.2ZM468.6 196.3h6.2v6.2h-6.2ZM479.2 183.7h6.2v6.2h-6.2ZM418.8 188.2h6.2v6.2h-6.2ZM425.7 190.2h6.2v6.2h-6.2ZM437.9 195.0h6.2v6.2h-6.2ZM440.0 197.7h6.2v6.2h-6.2ZM407.9 196.3h6.2v6.2h-6.2ZM407.9 203.2h6.2v6.2h-6.2ZM405.9 210.0h6.2v6.2h-6.2ZM416.1 197.7h6.2v6.2h-6.2ZM420.9 195.0h6.2v6.2h-6.2ZM427.7 199.1h6.2v6.2h-6.2ZM418.2 203.2h6.2v6.2h-6.2ZM427.7 204.5h6.2v6.2h-6.2ZM422.9 208.6h6.2v6.2h-6.2ZM429.1 208.6h6.2v6.2h-6.2ZM423.6 214.1h6.2v6.2h-6.2ZM420.9 216.8h6.2v6.2h-6.2ZM433.2 214.1h6.2v6.2h-6.2ZM437.9 218.8h6.2v6.2h-6.2ZM411.4 217.5h6.2v6.2h-6.2ZM410.0 222.9h6.2v6.2h-6.2ZM441.3 209.3h6.2v6.2h-6.2ZM444.1 214.7h6.2v6.2h-6.2ZM450.2 207.9h6.2v6.2h-6.2ZM450.2 216.1h6.2v6.2h-6.2ZM453.6 201.1h6.2v6.2h-6.2ZM460.4 201.1h6.2v6.2h-6.2ZM456.3 207.9h6.2v6.2h-6.2ZM463.8 206.6h6.2v6.2h-6.2ZM468.6 211.3h6.2v6.2h-6.2ZM460.4 214.1h6.2v6.2h-6.2ZM467.2 216.8h6.2v6.2h-6.2ZM476.1 212.7h6.2v6.2h-6.2ZM457.7 220.2h6.2v6.2h-6.2ZM464.5 222.2h6.2v6.2h-6.2ZM472.7 219.5h6.2v6.2h-6.2ZM477.5 222.2h6.2v6.2h-6.2ZM456.3 225.0h6.2v6.2h-6.2ZM474.0 225.9h6.2v6.2h-6.2ZM410.0 231.1h6.2v6.2h-6.2ZM418.2 231.1h6.2v6.2h-6.2ZM418.2 235.9h6.2v6.2h-6.2ZM410.0 240.7h6.2v6.2h-6.2ZM414.8 240.7h6.2v6.2h-6.2ZM419.5 250.9h6.2v6.2h-6.2ZM433.8 260.1h6.2v6.2h-6.2ZM410.0 253.6h6.2v6.2h-6.2ZM410.7 263.1h6.2v6.2h-6.2ZM416.8 269.3h6.2v6.2h-6.2ZM459.1 247.5h6.2v6.2h-6.2ZM468.6 222.9h6.2v6.2h-6.2ZM459.1 227.7h6.2v6.2h-6.2ZM465.2 227.7h6.2v6.2h-6.2ZM461.8 233.2h6.2v6.2h-6.2ZM467.9 233.2h6.2v6.2h-6.2ZM463.1 238.6h6.2v6.2h-6.2ZM468.6 238.6h6.2v6.2h-6.2ZM467.9 243.4h6.2v6.2h-6.2ZM342.1 191.3h6.2v6.2h-6.2ZM341.8 187.3h6.2v6.2h-6.2ZM350.7 184.5h6.2v6.2h-6.2ZM354.1 181.1h6.2v6.2h-6.2ZM349.3 190.7h6.2v6.2h-6.2ZM356.1 187.9h6.2v6.2h-6.2ZM356.8 193.4h6.2v6.2h-6.2ZM346.6 198.2h6.2v6.2h-6.2ZM352.7 198.2h6.2v6.2h-6.2ZM342.5 205.0h6.2v6.2h-6.2ZM359.5 179.1h6.2v6.2h-6.2ZM355.4 172.9h6.2v6.2h-6.2ZM362.9 172.9h6.2v6.2h-6.2ZM369.1 172.9h6.2v6.2h-6.2ZM375.2 172.9h6.2v6.2h-6.2ZM382.7 172.9h6.2v6.2h-6.2ZM389.5 172.9h6.2v6.2h-6.2ZM362.9 179.1h6.2v6.2h-6.2ZM369.1 180.4h6.2v6.2h-6.2ZM362.2 184.5h6.2v6.2h-6.2ZM370.4 188.6h6.2v6.2h-6.2ZM374.5 185.2h6.2v6.2h-6.2ZM373.1 193.4h6.2v6.2h-6.2ZM367.0 196.8h6.2v6.2h-6.2ZM362.2 196.8h6.2v6.2h-6.2ZM373.1 204.3h6.2v6.2h-6.2ZM383.4 205.0h6.2v6.2h-6.2ZM374.5 198.2h6.2v6.2h-6.2ZM388.1 179.1h6.2v6.2h-6.2ZM396.3 178.4h6.2v6.2h-6.2ZM402.5 175.0h6.2v6.2h-6.2ZM403.1 181.8h6.2v6.2h-6.2ZM382.0 183.2h6.2v6.2h-6.2ZM388.8 185.9h6.2v6.2h-6.2ZM384.1 190.7h6.2v6.2h-6.2ZM394.3 191.3h6.2v6.2h-6.2ZM390.9 198.8h6.2v6.2h-6.2ZM400.4 192.7h6.2v6.2h-6.2ZM399.0 206.3h6.2v6.2h-6.2ZM402.5 211.8h6.2v6.2h-6.2ZM401.8 217.9h6.2v6.2h-6.2ZM407.9 172.3h6.2v6.2h-6.2ZM398.4 172.3h6.2v6.2h-6.2ZM332.9 211.8h6.2v6.2h-6.2ZM344.5 139.9h6.2v6.2h-6.2ZM370.4 135.8h6.2v6.2h-6.2ZM362.2 145.0h6.2v6.2h-6.2ZM362.6 149.1h6.2v6.2h-6.2ZM370.4 145.7h6.2v6.2h-6.2ZM380.6 146.3h6.2v6.2h-6.2ZM378.6 149.8h6.2v6.2h-6.2ZM390.2 145.0h6.2v6.2h-6.2ZM390.2 148.4h6.2v6.2h-6.2ZM398.0 146.7h6.2v6.2h-6.2ZM388.8 129.3h6.2v6.2h-6.2ZM410.6 132.0h6.2v6.2h-6.2ZM407.9 157.2h6.2v6.2h-6.2ZM352.0 146.3h6.2v6.2h-6.2ZM349.3 150.4h6.2v6.2h-6.2ZM347.9 155.9h6.2v6.2h-6.2ZM345.9 160.0h6.2v6.2h-6.2ZM351.3 160.0h6.2v6.2h-6.2ZM342.5 165.4h6.2v6.2h-6.2ZM351.3 166.8h6.2v6.2h-6.2ZM361.6 166.1h6.2v6.2h-6.2ZM367.7 162.7h6.2v6.2h-6.2ZM372.5 153.2h6.2v6.2h-6.2ZM372.5 157.9h6.2v6.2h-6.2ZM373.1 165.4h6.2v6.2h-6.2ZM380.0 160.7h6.2v6.2h-6.2ZM384.7 156.6h6.2v6.2h-6.2ZM388.8 155.2h6.2v6.2h-6.2ZM394.3 161.3h6.2v6.2h-6.2ZM382.7 166.8h6.2v6.2h-6.2ZM388.8 169.5h6.2v6.2h-6.2ZM398.4 169.5h6.2v6.2h-6.2ZM408.6 166.8h6.2v6.2h-6.2ZM396.3 175.0h6.2v6.2h-6.2ZM459.1 141.9h6.2v6.2h-6.2ZM434.5 151.8h6.2v6.2h-6.2ZM441.3 154.5h6.2v6.2h-6.2ZM442.0 158.6h6.2v6.2h-6.2ZM434.2 160.3h6.2v6.2h-6.2ZM416.8 156.2h6.2v6.2h-6.2ZM425.0 157.9h6.2v6.2h-6.2ZM426.0 163.0h6.2v6.2h-6.2ZM420.2 167.5h6.2v6.2h-6.2ZM459.1 159.3h6.2v6.2h-6.2ZM456.3 168.8h6.2v6.2h-6.2ZM472.3 159.3h6.2v6.2h-6.2ZM473.7 163.4h6.2v6.2h-6.2ZM162.9 147.9h6.2v6.2h-6.2ZM163.6 154.1h6.2v6.2h-6.2ZM169.1 160.9h6.2v6.2h-6.2ZM196.3 155.1h6.2v6.2h-6.2ZM220.9 149.6h6.2v6.2h-6.2ZM215.4 157.1h6.2v6.2h-6.2ZM182.7 156.1h6.2v6.2h-6.2ZM188.2 156.1h6.2v6.2h-6.2ZM180.0 161.6h6.2v6.2h-6.2ZM192.9 162.3h6.2v6.2h-6.2ZM192.9 168.4h6.2v6.2h-6.2ZM183.4 169.1h6.2v6.2h-6.2ZM202.5 165.7h6.2v6.2h-6.2ZM205.9 169.8h6.2v6.2h-6.2ZM179.3 173.2h6.2v6.2h-6.2ZM180.0 180.0h6.2v6.2h-6.2ZM180.0 182.7h6.2v6.2h-6.2ZM177.9 189.5h6.2v6.2h-6.2ZM182.7 192.9h6.2v6.2h-6.2ZM188.2 175.9h6.2v6.2h-6.2ZM195.0 175.9h6.2v6.2h-6.2ZM200.4 180.0h6.2v6.2h-6.2ZM189.5 184.7h6.2v6.2h-6.2ZM195.0 189.5h6.2v6.2h-6.2ZM203.8 185.4h6.2v6.2h-6.2ZM205.9 192.2h6.2v6.2h-6.2ZM212.7 171.1h6.2v6.2h-6.2ZM217.5 171.8h6.2v6.2h-6.2ZM224.3 173.8h6.2v6.2h-6.2ZM228.4 173.8h6.2v6.2h-6.2ZM212.7 177.9h6.2v6.2h-6.2ZM217.5 177.2h6.2v6.2h-6.2ZM222.2 181.3h6.2v6.2h-6.2ZM212.7 184.1h6.2v6.2h-6.2ZM218.1 187.5h6.2v6.2h-6.2ZM225.6 186.8h6.2v6.2h-6.2ZM233.1 178.6h6.2v6.2h-6.2ZM238.6 173.2h6.2v6.2h-6.2ZM238.6 182.7h6.2v6.2h-6.2ZM233.1 188.1h6.2v6.2h-6.2ZM239.3 192.2h6.2v6.2h-6.2ZM216.8 193.6h6.2v6.2h-6.2ZM223.6 193.6h6.2v6.2h-6.2ZM229.0 193.6h6.2v6.2h-6.2ZM186.8 192.9h6.2v6.2h-6.2ZM257.7 151.4h6.2v6.2h-6.2ZM259.8 164.3h6.2v6.2h-6.2ZM277.5 173.2h6.2v6.2h-6.2ZM280.2 176.2h6.2v6.2h-6.2ZM261.8 180.0h6.2v6.2h-6.2ZM269.3 178.6h6.2v6.2h-6.2ZM238.6 180.0h6.2v6.2h-6.2ZM244.8 181.3h6.2v6.2h-6.2ZM252.9 178.6h6.2v6.2h-6.2ZM253.6 184.1h6.2v6.2h-6.2ZM238.6 186.8h6.2v6.2h-6.2ZM246.1 186.8h6.2v6.2h-6.2ZM252.9 188.1h6.2v6.2h-6.2ZM246.8 192.9h6.2v6.2h-6.2ZM502.9 165.7h6.2v6.2h-6.2ZM330.6 223.2h6.2v6.2h-6.2ZM336.0 223.5h6.2v6.2h-6.2ZM331.9 227.3h6.2v6.2h-6.2ZM321.7 230.7h6.2v6.2h-6.2ZM330.2 232.7h6.2v6.2h-6.2ZM331.6 236.8h6.2v6.2h-6.2ZM335.7 240.2h6.2v6.2h-6.2ZM339.8 244.3h6.2v6.2h-6.2ZM343.5 235.4h6.2v6.2h-6.2ZM352.7 236.1h6.2v6.2h-6.2ZM358.1 234.1h6.2v6.2h-6.2ZM363.6 234.8h6.2v6.2h-6.2ZM367.0 236.8h6.2v6.2h-6.2ZM348.6 242.2h6.2v6.2h-6.2ZM354.1 242.9h6.2v6.2h-6.2ZM360.2 242.2h6.2v6.2h-6.2ZM365.0 245.0h6.2v6.2h-6.2ZM374.5 236.1h6.2v6.2h-6.2ZM373.8 240.2h6.2v6.2h-6.2ZM371.1 247.7h6.2v6.2h-6.2ZM365.6 252.5h6.2v6.2h-6.2ZM381.0 247.0h6.2v6.2h-6.2ZM390.9 252.5h6.2v6.2h-6.2ZM376.9 259.3h6.2v6.2h-6.2ZM535.5 198.6h6.2v6.2h-6.2ZM543.3 198.6h6.2v6.2h-6.2ZM551.1 196.6h6.2v6.2h-6.2ZM533.6 183.0h6.2v6.2h-6.2ZM537.5 179.1h6.2v6.2h-6.2ZM525.7 188.8h6.2v6.2h-6.2ZM482.8 212.3h6.2v6.2h-6.2ZM482.8 220.1h6.2v6.2h-6.2ZM529.7 202.5h6.2v6.2h-6.2ZM268.8 249.1h6.2v6.2h-6.2ZM272.2 245.0h6.2v6.2h-6.2ZM277.7 245.7h6.2v6.2h-6.2ZM281.1 246.3h6.2v6.2h-6.2ZM286.5 255.2h6.2v6.2h-6.2ZM255.2 258.9h6.2v6.2h-6.2ZM269.5 257.9h6.2v6.2h-6.2ZM644.0 106.1h6.2v6.2h-6.2ZM655.5 110.6h6.2v6.2h-6.2ZM631.2 132.1h6.2v6.2h-6.2ZM636.7 143.5h6.2v6.2h-6.2ZM656.5 131.1h6.2v6.2h-6.2ZM653.4 142.6h6.2v6.2h-6.2ZM649.8 152.0h6.2v6.2h-6.2ZM674.8 143.9h6.2v6.2h-6.2ZM640.5 221.2h6.2v6.2h-6.2ZM646.2 224.5h6.2v6.2h-6.2ZM703.9 138.6h6.2v6.2h-6.2ZM643.0 250.5h6.2v6.2h-6.2ZM622.5 272.9h6.2v6.2h-6.2ZM625.0 281.0h6.2v6.2h-6.2ZM617.6 284.3h6.2v6.2h-6.2ZM618.4 280.2h6.2v6.2h-6.2ZM639.7 284.0h6.2v6.2h-6.2ZM654.1 278.6h6.2v6.2h-6.2ZM711.0 293.3h6.2v6.2h-6.2ZM707.6 145.8h6.2v6.2h-6.2ZM674.9 147.9h6.2v6.2h-6.2ZM675.6 154.1h6.2v6.2h-6.2ZM681.1 160.9h6.2v6.2h-6.2ZM708.3 155.1h6.2v6.2h-6.2ZM694.7 156.1h6.2v6.2h-6.2ZM700.2 156.1h6.2v6.2h-6.2ZM692.0 161.6h6.2v6.2h-6.2ZM704.9 162.3h6.2v6.2h-6.2ZM704.9 168.4h6.2v6.2h-6.2ZM695.4 169.1h6.2v6.2h-6.2ZM714.5 165.7h6.2v6.2h-6.2ZM717.9 169.8h6.2v6.2h-6.2ZM691.3 173.2h6.2v6.2h-6.2ZM692.0 180.0h6.2v6.2h-6.2ZM692.0 182.7h6.2v6.2h-6.2ZM689.9 189.5h6.2v6.2h-6.2ZM694.7 192.9h6.2v6.2h-6.2ZM700.2 175.9h6.2v6.2h-6.2ZM707.0 175.9h6.2v6.2h-6.2ZM712.4 180.0h6.2v6.2h-6.2ZM701.5 184.7h6.2v6.2h-6.2ZM707.0 189.5h6.2v6.2h-6.2ZM715.8 185.4h6.2v6.2h-6.2ZM717.9 192.2h6.2v6.2h-6.2ZM698.8 192.9h6.2v6.2h-6.2Z"/></svg>
<div class="abs" style="left:496px;top:690px;width:717px;height:9px;background:linear-gradient(rgba(0,0,0,0),rgba(0,0,0,.10))"></div>
<div class="abs" style="left:500px;top:586px;width:78px;height:78px;background:#fff;box-shadow:0 6px 12px rgba(0,0,0,.38)"></div>
<svg class="abs" style="left:503px;top:589px" width="72" height="72" viewBox="0 0 72 72">
  <rect width="72" height="72" fill="#ebe3db"/>
  <g fill="none" stroke="#ecc3b0" stroke-width="1">
    <path d="M0 12 L30 20 L72 14 M0 30 L28 36 M4 0 L10 72 M20 0 L16 40 M60 0 L52 40 L72 52 M44 42 L72 38 M42 52 L66 72 M50 48 L40 72 M0 50 L20 58 M0 64 L26 62"/>
  </g>
  <g fill="none" stroke="#a9b6e0" stroke-width=".8">
    <path d="M12 0 L14 30 L8 72 M26 0 L24 28 M0 22 L20 24 M0 42 L14 44"/>
  </g>
  <path fill="#b8d2d4" d="M42 0 L50 0 L45 28 L41 40 L38 50 L36 60 L37 72 L31 72 L30 60 L24 62 L17 54 L13 44 L20 36 L32 38 L37 28 Z"/>
  <path fill="#b8d2d4" d="M38 62 L56 64 L72 56 L72 72 L36 72 Z"/>
  <path fill="#b8d2d4" d="M55 10 L72 8 L72 22 L62 20 L52 18 Z"/>
  <path fill="#f3c9a8" d="M45 12 L51 8 L48 26 L43 30 Z"/>
  <g fill="#c6e0bf">
    <rect x="28" y="8" width="6" height="5"/><rect x="56" y="36" width="6" height="4"/><rect x="8" y="56" width="6" height="8"/><rect x="60" y="62" width="5" height="5"/><rect x="18" y="14" width="4" height="4"/>
  </g>
</svg>
<span class="abs" style="left:505px;top:702px;font-size:12px;line-height:14px;color:#333;letter-spacing:.24px;white-space:nowrap">© <span style="color:#3f7fae">OpenStreetMap</span> contributors.</span>
<span class="abs" style="left:1074px;top:707px;font-size:13px;line-height:15px;color:#333;white-space:nowrap">Scale:</span>
<div class="abs" style="left:1114px;top:701px;width:105px;height:25px;border:1px solid #222;border-radius:3px;background:#efefef"></div>
<span class="abs" style="left:1123px;top:707px;font-size:12px;line-height:15px;color:#222;white-space:nowrap">1 : 295829355</span>
<svg class="abs" style="left:1204px;top:709px" width="9" height="8" viewBox="0 0 9 8"><path d="M1 2 L4.5 5.5 L8 2" fill="none" stroke="#111" stroke-width="2"/></svg>
</body></html>
